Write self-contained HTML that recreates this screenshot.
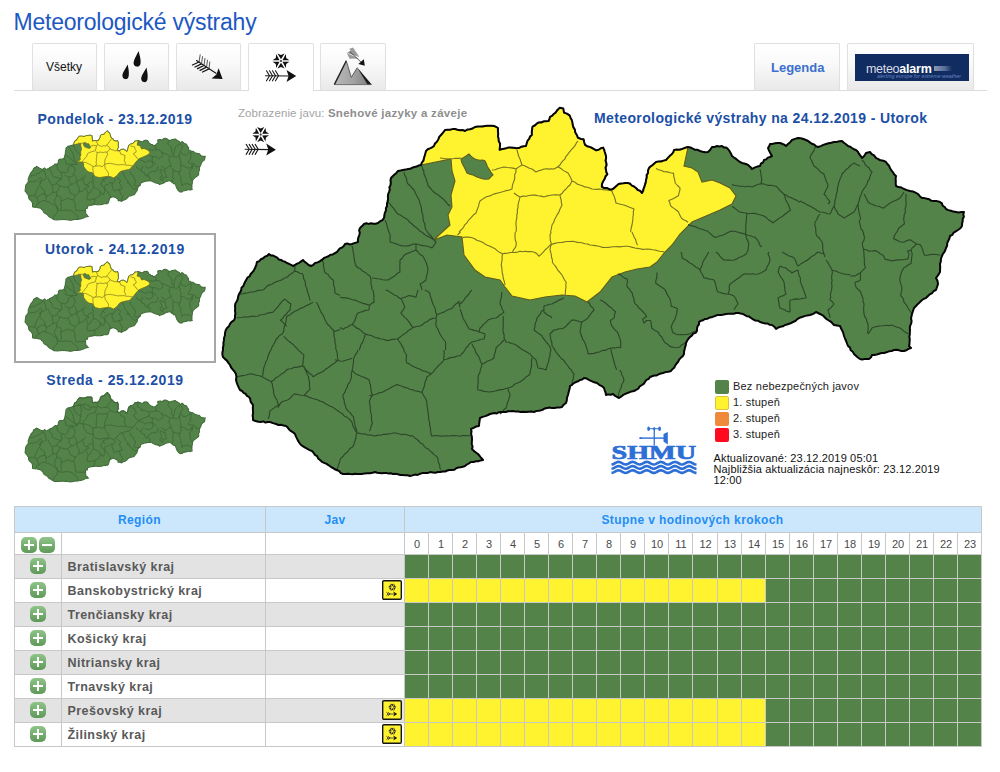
<!DOCTYPE html>
<html><head><meta charset="utf-8">
<style>
*{margin:0;padding:0;box-sizing:border-box}
html,body{width:1000px;height:772px;overflow:hidden;background:#fff;font-family:"Liberation Sans",sans-serif}
.a{position:absolute;white-space:nowrap}
#title{left:13.5px;top:8.5px;font-size:23px;letter-spacing:-0.22px;line-height:26px;color:#1d58c2;}
.tab{position:absolute;top:43px;height:47px;border:1px solid #e0e0e0;border-bottom:none;border-radius:2px 2px 0 0;background:linear-gradient(#fff 0%,#fafafa 40%,#e9e9e9 100%)}
.tab.sel{background:#fff;height:48px}
#tabline{position:absolute;left:14px;top:90px;width:973px;height:1px;background:#dcdcdc}
.dt{font-size:14px;line-height:16px;letter-spacing:0.5px;font-weight:bold;color:#1c4fa6;text-align:center}
svg{position:absolute;left:0;top:0}
.leg{font-size:11px;line-height:13px;letter-spacing:0.2px;color:#222}
.sq{position:absolute;width:14px;height:14px;border-radius:2px}
table{position:absolute;left:14px;top:506px;border-collapse:collapse;}
.rn{font-size:12.5px;line-height:14px;letter-spacing:0.45px;font-weight:bold;color:#595959}
.hr{font-size:11px;line-height:13px;color:#4a4a4a;text-align:center}
.th{font-size:12px;line-height:14px;letter-spacing:0.4px;font-weight:bold;color:#1f8ef5;text-align:center}
.pl{position:absolute;width:16px;height:16px;border-radius:5px;background:linear-gradient(#8fc48a,#5e9a58)}
.pl:before{content:"";position:absolute;left:3px;top:7px;width:10px;height:2px;background:#fff}
.pl:after{content:"";position:absolute;left:7px;top:3px;width:2px;height:10px;background:#fff}
.pl.mi:after{display:none}
.ic{position:absolute;width:20px;height:20px;font-size:0}
</style></head><body>
<div id="title" class="a">Meteorologické výstrahy</div>
<div id="tabline"></div>
<div class="tab" style="left:32px;width:65px"></div>
<div class="tab" style="left:104px;width:65px"></div>
<div class="tab" style="left:176px;width:65px"></div>
<div class="tab sel" style="left:248px;width:66px"></div>
<div class="tab" style="left:320px;width:66px"></div>
<div class="tab" style="left:754px;width:86px"></div>
<div class="tab" style="left:847px;width:127px"></div>
<div class="a" style="left:46px;top:60px;font-size:12px;color:#111">Všetky</div>
<div class="a" style="left:771px;top:60px;font-size:13px;font-weight:bold;color:#3b6fd0">Legenda</div>
<div class="a" style="left:855px;top:54px;width:114px;height:27px;background:#112c60"></div>
<div class="a" style="left:866px;top:62px;font-size:12.5px;letter-spacing:-0.3px;color:#d8dce6;line-height:14px">meteo<b style="color:#fff;letter-spacing:-0.2px">alarm</b></div>
<div class="a" style="left:934px;top:65.5px;width:18px;height:5.5px;background:linear-gradient(90deg,#8a97b4,#5a6d98 60%,#112c60)"></div>
<div class="a" style="left:877px;top:73px;font-size:5.3px;font-style:italic;color:#6684c4;line-height:6px">alerting europe for extreme weather</div>

<div class="a dt" style="left:14px;top:111px;width:202px;letter-spacing:0.45px">Pondelok - 23.12.2019</div>
<div class="a" style="left:14px;top:233px;width:202px;height:130px;border:2px solid #a6a6a6"></div>
<div class="a dt" style="left:14px;top:241px;width:202px;letter-spacing:0.65px">Utorok - 24.12.2019</div>
<div class="a dt" style="left:14px;top:372px;width:202px;letter-spacing:0.6px">Streda - 25.12.2019</div>

<div class="a" style="left:238px;top:107px;font-size:11.5px;line-height:13px;letter-spacing:0.1px;color:#a3a3a3">Zobrazenie javu: <b style="color:#8e8e8e;letter-spacing:0.28px">Snehové jazyky a záveje</b></div>
<div class="a" style="left:594px;top:110px;font-size:14px;line-height:16px;letter-spacing:0.38px;font-weight:bold;color:#1c4fa6">Meteorologické výstrahy na 24.12.2019 - Utorok</div>

<svg width="1000" height="772" viewBox="0 0 1000 772">
<defs><path id="ol" d="M223 350 L222.9 347.6 L223.5 345.2 L223.4 342.8 L223.9 340.4 L224 338 L224.9 335.5 L225 332.9 L225.7 330.3 L227 328 L228.9 326.3 L230 323.8 L231.6 321.8 L233.9 320.4 L235 318 L235 315.6 L235.4 313.2 L235 310.8 L235.2 308.4 L235 306 L235.4 303.5 L236.8 301.3 L237.8 298.9 L238.2 296.4 L239 294 L240.3 292.1 L241.2 290.1 L241.5 287.8 L243.3 286.1 L244.1 284 L245 282 L246.2 279.9 L247.4 277.7 L249.6 276.3 L250.7 274 L252.4 272.2 L253.9 270.3 L255 268 L256.2 265.1 L257 262 L259.3 261.1 L260.9 259.2 L263.2 258.3 L265 256.6 L267.3 255.8 L269 254 L270.8 255.4 L273.2 255.6 L275.2 256.6 L277.2 257.7 L278.8 259.5 L281 259.9 L282.9 261.1 L285.1 261.8 L287 263 L289.1 263.9 L291.1 264.8 L293 266 L295.1 264.9 L297.1 263.7 L299.2 262.8 L301.1 261.4 L303 260 L304.7 261.9 L306.7 263.3 L308.6 265 L311 266 L313.3 264.8 L315.1 263 L317.7 262.4 L320 261.1 L322.1 259.7 L324 258 L326.2 257.1 L328.4 256.2 L330.4 254.7 L332.8 254.4 L334.9 253.1 L337 252 L338.4 250.2 L339.8 248.4 L342.1 247.5 L343.8 246 L345 244 L347.3 243.5 L349.7 244.4 L352 244 L355 242.9 L358 242 L357.9 239.6 L358.4 237.3 L359.3 235 L359.8 232.7 L359.1 230.3 L360 228 L362.1 226.1 L364 224 L366.3 223.3 L368.7 223.9 L371 223.3 L373.4 223.8 L375.7 223.7 L378 223 L380 221.3 L382.4 220.1 L384 218 L384.4 215.5 L384.7 213.1 L385.9 210.8 L385.9 208.3 L387 206 L387 203.6 L387.6 201.3 L388.1 199 L387.9 196.6 L388.1 194.3 L389 192 L389.8 189.7 L389.4 187.3 L390.5 185.1 L390.8 182.7 L390.5 180.3 L391 178 L392.7 176.2 L394.5 174.5 L396.4 172.9 L398 171 L400.5 170.6 L403 170.1 L405.5 169.6 L408 169 L410.3 168.8 L412.3 167.7 L414.5 166.9 L416.7 166.6 L418.7 165.4 L421 165 L421.8 162.6 L423.5 160.6 L424 158 L424.7 155.7 L425.4 153.3 L426 151 L427.7 149.3 L429.9 148.4 L432.1 147.3 L434 146 L434.9 143.5 L436.9 141.7 L438.3 139.5 L439.2 136.9 L441 135 L443.1 132.6 L445 130 L447.5 129.7 L450 129.7 L452.5 129.1 L455 129 L457.5 129.7 L459.9 130.3 L462.6 129.9 L465 131 L467.3 129.5 L470.1 129.2 L472.7 128.5 L475 127 L477.5 126.5 L480 126.4 L482.5 126.4 L485 126 L487.2 125.8 L489.5 125.8 L491.8 125.8 L494 126 L496.1 126.9 L498 128 L497.9 130.8 L498.2 133.6 L498 136.4 L498.6 138.8 L498.7 141.3 L500.1 143.5 L500 146 L499.6 149.7 L502.4 149.1 L505.3 148.6 L508 147.6 L510.8 147.6 L513.6 147.7 L516.4 148.3 L518.9 148.1 L521.1 146.8 L523.5 146.2 L526 146 L526.7 143.3 L527.6 140.6 L529.2 138.9 L530 136.6 L531.8 135 L531.8 132.2 L532.1 129.4 L532.5 126.6 L534.8 125.5 L536.7 123.7 L538.8 122.4 L541.3 122.5 L543.6 121.3 L546.1 121.2 L548.6 121 L549.5 119 L550 116.8 L552.1 115.8 L553.7 114 L555.6 112.6 L557.4 109.9 L559.8 107.7 L563.3 108.4 L564 112.6 L567 113.6 L569.6 115.4 L570.5 117.7 L571.8 119.9 L572.4 122.4 L572.7 125 L573.4 127.4 L574.9 129.6 L575.2 132.2 L576.8 134.9 L578 137.8 L580.7 138.9 L583.6 139.2 L584.1 142 L585 144.8 L587.1 146.2 L589.6 146.9 L591.9 147.8 L594.1 149.1 L596.2 150.4 L598.7 149.8 L600.8 148.3 L603.2 147.6 L604.1 149.6 L604.7 151.8 L605.4 153.9 L606 156 L606.1 158.3 L605.5 160.7 L606.4 163 L606.6 165.3 L605.5 167.7 L606 170 L606.3 172.2 L607.4 174.2 L605.5 176.2 L604.7 178.9 L603.2 181.2 L602 183.9 L601.8 186.8 L604.1 188 L606.8 187.9 L609.1 189.2 L611.6 189.6 L613.6 188.5 L615.2 187 L616.9 185.4 L618.6 184 L620.9 183.5 L623.3 183.3 L625.6 182.9 L628 183 L630.3 183.8 L631.9 185.6 L634.1 186.5 L636 188 L637.8 190 L640.3 190.9 L642 193 L643.1 191 L643.6 188.7 L644.5 186.6 L645.1 184.5 L645.8 182.3 L646 180 L646.7 177.6 L646.6 175.1 L648.1 172.9 L648 170.3 L649 168 L650.6 166.3 L652.6 165.1 L654.3 163.5 L656 162 L658.5 161.4 L661.1 161.5 L663.5 160.6 L666 160 L667.9 157.9 L669.8 155.8 L672 154 L673.4 152.2 L674 150 L676.7 149.6 L679.4 149.7 L682 149 L684.9 147.8 L688 147 L690.5 147.5 L692.8 148.6 L695.1 149.8 L697.7 149.8 L700 151 L702.6 151.7 L705.3 152.2 L708 152 L710.3 149.7 L712 147 L714.5 147.1 L716.9 145.9 L719.5 146.4 L722 146 L723.8 147.4 L726.2 147.5 L728 149 L729.6 151.2 L730.9 153.5 L732 156 L734 157.5 L736.1 158.9 L738 160.5 L740 162 L742.9 163.3 L746 164 L748.4 165.2 L750.3 166.9 L752 169 L754.5 167.6 L757.2 166.6 L760 166 L760.9 163.7 L763.1 162.3 L764 160 L766.2 159.4 L767.8 157.6 L770 157 L772 156 L770.8 154.1 L769.8 152.1 L768.8 150.1 L768 148 L769.2 146.1 L770 144 L772.5 143.9 L775 143.3 L777.5 142.9 L780 143 L782.1 143.8 L784.2 144.6 L786 146 L788 144 L790.2 142.2 L792 140 L795 138.9 L798 138 L800.8 138.2 L803.4 139 L806 140 L808.1 141 L809.9 142.4 L811.8 143.8 L814.1 144.5 L815.8 146.1 L818 147 L820.7 146.1 L823.3 144.9 L826 144 L828.6 143.2 L831.3 142.7 L834 142 L836.7 141.9 L839.3 141.2 L842 141 L843.9 142.8 L846 144.3 L848 146 L850.1 146.7 L852 148 L853.9 149.2 L856 150 L857.9 151.7 L859.1 153.9 L860.6 155.9 L862 158 L864.4 155.8 L866 153 L870 152 L871.7 154.1 L874.1 155.4 L875.7 157.6 L878 159 L880.5 160.3 L883.4 160.7 L886 162 L887.4 164 L889 165.7 L890 168 L891.2 170.2 L892.8 172.1 L894.1 174.3 L896 176 L895.6 178.5 L895.8 181 L895.7 183.5 L896 186 L898.6 187.1 L901.5 187.6 L904 189 L907 190.1 L910 191 L912.9 191.4 L915.5 192.6 L918 194 L919.8 196.2 L922 198 L924.5 198.1 L926.9 198.7 L929.3 199.3 L931.5 200.8 L934 201 L937.1 201.1 L940 202 L941.9 203.4 L942.7 205.8 L944.8 207 L946 209 L948.4 210.1 L950.9 210.7 L953.4 211.6 L956 212 L958.7 212.5 L961.3 212.1 L964 212 L963.3 214.3 L963.9 216.7 L962.7 219 L962.7 221.3 L962.1 223.6 L962 226 L960.3 228.3 L958 230 L955.8 231.3 L953.7 232.6 L952.3 234.9 L950 236 L949.4 238.5 L948.3 240.8 L947.2 243.1 L947.1 245.7 L946 248 L945.3 250.2 L944.3 252.1 L942.9 253.9 L942 256 L941 258.6 L940.8 261.4 L940 264 L940.2 266.7 L940.1 269.3 L940 272 L938.8 274.1 L937.4 276.1 L936 278 L937.5 280.8 L938 284 L937 287 L936 290 L933.7 291 L932.1 293.1 L929.8 294.3 L928 296 L926.2 297.8 L923.9 298.8 L921.8 300.3 L920 302 L917.9 303.9 L916 306 L914 308 L913 311 L912 314 L911.5 316.3 L911 318.5 L911.6 320.9 L911.3 323.2 L910.3 325.4 L909.8 327.7 L910 330 L909.8 332.3 L909.8 334.6 L909.3 336.8 L909.8 339.2 L909.6 341.4 L909.5 343.7 L909 346 L911 348 L908.6 348.9 L906.4 350.2 L904 351 L901.5 351.1 L899 350.3 L896.6 349.7 L894 350 L891.6 351 L888.9 351.3 L886.5 352.3 L884 353 L881.5 353 L879.2 353.7 L876.8 354.5 L874.5 354.9 L872 355 L871 357.3 L869 359 L866.8 359 L864.5 359.1 L862.2 359.4 L860 359 L857.9 357.5 L855.9 355.8 L854 354 L852.8 351.8 L850.7 350.3 L850 347.6 L848 346 L847 343.5 L846.1 341 L845 338.5 L844 336 L843.4 333.4 L842.4 330.9 L841.1 328.5 L840 326 L837 325.5 L834 325 L832.2 323.1 L830.3 321.3 L828 320 L825.9 318.6 L824.2 316.8 L822.3 315.1 L820 314 L818 313 L816 312 L814.1 313.3 L812.1 314.3 L810 315 L807.3 315.4 L804.6 316.1 L802 317 L799.5 317.8 L797.3 319.1 L795.4 321 L793 322 L790.5 323.3 L787.8 324.3 L785 325 L782.9 326.3 L780.4 326.8 L778.1 327.6 L776 329 L774.3 326.7 L772 325 L769.5 324.7 L767.3 323.4 L764.7 323.4 L762.4 322.7 L760 322 L757.9 320.7 L755.3 320.5 L753.1 319.4 L751 318 L749.2 316.6 L746.9 316.2 L744.9 315.2 L743 314 L740.7 313.6 L738.4 313.1 L736 313 L733.6 313.8 L731 313.7 L728.5 313.8 L726 314 L723.8 314.4 L721.7 315.1 L719.4 315.1 L717.1 315.1 L715 316 L712.5 316.9 L710 317.4 L707.6 318.7 L705 319 L703.1 320.2 L700.9 320.8 L699 322 L699 324.4 L697.5 326.4 L697 328.6 L697 331 L695.6 332.9 L693.2 333.6 L691.8 335.6 L690 337 L688.4 338.8 L687.1 340.8 L686 343 L685.8 345.2 L685 347.4 L684.6 349.6 L684 351.7 L684 354 L682.7 356.2 L680.8 357.8 L679.1 359.7 L678 362 L676.4 363.7 L675.2 365.6 L674.2 367.7 L672.4 369.2 L671 371 L668.4 371.8 L665.6 372.1 L663 373 L660.8 373.5 L658.6 374.3 L656.6 375.4 L654.3 375.5 L652.1 376.2 L650 377 L648.7 378.9 L646.5 379.9 L645.1 381.7 L643.9 383.7 L642 385 L639.7 386.3 L638.3 388.7 L636 390 L633.9 391 L631.5 391.4 L629.4 392.3 L627.2 393.1 L625 394 L622.9 395.2 L621 396.7 L619 398 L616.9 396.9 L614.8 395.7 L613 394 L610.7 394.8 L608.3 394.4 L606 395 L605.6 392.6 L604.7 390.3 L604 388 L601.8 386.1 L599.2 384.8 L597 383 L594.2 382.3 L591.6 381.1 L589 380 L586.7 378.6 L584 378 L582.2 379.5 L580 380 L578.1 381.3 L576 382 L573.8 383.1 L572.1 384.8 L570 386 L569.7 388.3 L569.1 390.5 L568.5 392.7 L568 395 L567 397.6 L566.8 400.4 L566 403 L563.7 404.7 L562 407 L559.5 407.6 L557 407.6 L554.5 408 L552 408.1 L549.5 407.5 L547 408 L544.8 408.4 L542.8 409.7 L540.6 410.4 L538.4 410.8 L536.1 411.1 L534 412 L531.3 411.6 L528.7 411.7 L526 412 L523.4 411.7 L520.8 412 L518.2 411.5 L515.6 411.6 L513 411 L510.6 411.2 L508.2 411.3 L505.8 412 L503.4 412.1 L501 412 L498.8 412.2 L496.8 413.5 L494.4 413.1 L492.2 413.5 L490 414 L488 415 L485.4 416.1 L482.6 416.9 L480 418 L479.6 420.7 L479.2 423.3 L479 426 L476.1 426.5 L473.6 427.8 L471 429 L471.5 431.5 L471.1 434 L471.8 436.5 L472 439 L471.9 441.5 L471.7 444 L472.6 446.5 L472 449 L473.8 450.9 L475.9 452.5 L478 454 L479.7 456 L481.3 458 L483 460 L480.6 460.4 L478.3 461.2 L475.8 461.2 L473.5 462.1 L471 462 L469 463.3 L466.9 464.5 L465 466 L462.9 466.7 L460.6 467.3 L458.3 467.5 L456.2 468.2 L454.3 469.8 L452 470 L449.6 470 L447.3 470.5 L445.1 471.5 L442.7 471.5 L440.4 472 L438 472 L435.4 472.7 L432.8 472.4 L430.2 472.1 L427.6 473 L425 473 L422.4 473.1 L420 473.8 L417.6 474.9 L414.9 474.6 L412.5 475.4 L410 476 L407.6 475.2 L405.2 475.2 L402.7 474.9 L400.3 475 L397.9 474.2 L395.5 473.8 L393 474 L390.8 473.3 L388.5 473.6 L386.3 472.9 L384 473 L381.7 473.2 L379.4 473 L377.2 472.8 L375 472 L372.5 472.8 L369.9 473.2 L367.2 473.2 L364.6 473.4 L362 474 L359.6 474 L357.2 474.1 L354.9 473.8 L352.5 474.2 L350.1 474 L347.8 473.7 L345.4 474.1 L343 474 L340.8 473.1 L339.2 471.2 L337.1 470.2 L334.9 469.3 L333 468 L330.8 466.8 L328.7 465.3 L326.6 463.9 L324.2 462.9 L321.9 461.8 L320 460 L318.1 458.4 L317.1 456.2 L314.9 454.9 L313.6 452.8 L312 451 L309.6 450.1 L307.4 448.9 L305.2 447.7 L303.1 446.3 L301 445 L299.5 443 L298.1 440.9 L297 438.6 L295.9 436.4 L295 434 L293.2 432.4 L291 431.2 L289.2 429.6 L287.8 427.6 L286 426 L283.5 425.6 L281 424.8 L278.4 425 L276 424 L273 423.1 L270 422 L267.8 422.1 L265.5 422.6 L263.2 421.4 L261 422 L258.3 421.7 L255.5 421.1 L253 420 L253 417.8 L252.6 415.5 L253.1 413.2 L253 411 L252.8 408 L253 405 L251.6 403.2 L250.5 401.2 L250.2 398.9 L249 397 L247 395.8 L245.6 393.9 L243.6 392.8 L242.1 391 L240 390 L238.8 387.6 L237.7 385.1 L236.7 382.6 L236 380 L236.4 377 L236 374 L234.6 371.7 L232.8 369.6 L231.1 367.5 L230 365 L228.4 362.9 L226.9 360.6 L224.8 358.9 L223 357 L222.4 354.7 L222.4 352.3 Z"/><path id="yl" d="M421 165 L424 158 L426 151 L434 146 L441 135 L445 130 L455 129 L465 131 L475 127 L485 126 L494 126 L498 128 L498 136.4 L500 146 L499.6 149.7 L508 147.6 L516.4 148.3 L526 146 L527.6 140.6 L531.8 135 L532.5 126.6 L538.8 122.4 L548.6 121 L550 116.8 L555.6 112.6 L559.8 107.7 L563.3 108.4 L564 112.6 L569.6 115.4 L572.4 122.4 L575.2 132.2 L578 137.8 L583.6 139.2 L585 144.8 L596.2 150.4 L603.2 147.6 L606 156 L606 170 L607.4 174.2 L603.2 181.2 L601.8 186.8 L611.6 189.6 L618.6 184 L628 183 L636 188 L642 193 L646 180 L649 168 L656 162 L666 160 L672 154 L674 150 L682 149 L688 147 L684 166 L692 168 L698 172 L702 182 L712 180 L720 183 L730 188 L736 196 L732 204 L720 210 L706 216 L692 222 L680 234 L672 245 L665 252 L657 262 L650 267 L637 269 L625 272 L612 277 L600 292 L587 302 L575 296 L562 295 L545 297 L530 300 L512 296 L505 287 L500 280 L485 277 L475 270 L464 255 L462 237 L447 235 L434 240 L439 235 L450 225 L448 215 L452 207 L451 195 L455 181 L452 171 L451 159 Z M461 159 L463.7 157.4 L466.4 155.8 L469 154 L470.8 155.8 L472.8 157.6 L475 159 L477.5 159.7 L479.9 160.3 L482.6 160.1 L485 161 L486.4 163.7 L487.3 166.5 L489 169 L490.9 172.1 L493 175 L490.8 176.8 L489 179 L486 179.3 L483 179 L480 178 L477 177 L473 175 L469.9 174.2 L467 173 L465.7 170.3 L464.4 167.6 L463 165 L461.6 162.1 Z" fill-rule="evenodd"/><path id="dg" d="M240.2 294.4 L242.8 293.7 L245.3 293.1 L248 293 L250.5 292 L253.2 291.9 L255.7 291.2 L258.2 290.4 L260.9 290.3 L263.5 289.8 L266.6 286.6 L269 285.1 L271.7 284.2 L274.1 282.8 L276.6 281.6 L279.3 280.7 L281.9 279.9 L284.2 278.2 L286.9 277.3 L289.3 275 L292.1 273.3 L294.6 271.1 L295 267.7 L294.6 264.3 M294.6 271.1 L297.3 271.7 L299.7 273.2 L302.4 273.6 L303.4 276 L303.6 278.6 L304.9 280.9 L305.5 283.4 L305.5 286 L306.9 288.3 L307.2 290.8 L308.1 293.2 L308.8 295.7 L309.5 298.1 L310.2 300.6 M237.1 317.7 L239.8 317.5 L242.4 317.2 L245.1 316.7 L247.8 317.2 L250.4 316.2 L253.1 316.4 L255.8 316.2 L258.3 316 L260.6 314.7 L263.1 314.5 L265.6 314 L267.9 312.9 L270.4 312.6 L272.9 312.1 L274.7 310.4 L276.2 308.4 L278.1 306.7 L279.4 304.5 L281.2 302.7 L282.8 300.7 L284.7 299.1 L286.8 300.6 L288.6 302.5 L290.9 303.7 L290.4 306.8 L290 310 L287.9 311.9 L286.3 314.2 L284.2 316 L282.7 318.4 L280.6 320.2 L282.8 322.1 L284.7 324.4 L286.9 326.4 M313.3 302.2 L310.7 303.4 L308.1 304.9 L305.5 306 L303 307.6 L300.2 308.4 L297.7 310 L294.9 311.3 L292.2 313 L289.8 314.9 L286.9 316.2 L286.3 318.8 L286 321.4 L285.5 324 L284.4 326.5 L283.8 329 L283.7 331.7 L282.1 333.9 L279.6 335.4 L277.9 337.5 L276 339.5 L274.9 342 L273.7 344.5 L272.1 346.9 L271.1 349.4 L269.8 351.9 L268.7 354.3 L267.8 356.8 L267.3 359.5 L265.8 361.8 L265.1 364.4 L264.1 366.8 L263.5 369.3 L263.1 371.8 L263 374.4 L262 376.8 M237.1 376.8 L239.9 376.1 L242.7 375.6 L245.6 375.3 L248.3 374.3 L251.1 373.7 L253.8 374.5 L256.5 375.3 L259.4 375.8 L262 376.8 L264.3 378 L266.6 379.3 L268.9 380.6 L271.3 381.5 L272.3 384.2 L272.7 387.1 L273.5 389.8 L273.5 392.8 L274.4 395.5 L275.4 397.9 L277.1 400 L277.5 402.7 L279.1 404.8 L276.5 406 L274.4 407.8 L272.1 409.4 L269.8 411 L269.6 413.7 L269.2 416.3 L268.2 418.8 M283.7 336.4 L285.6 338.1 L287.3 339.9 L289.1 341.6 L291.3 342.9 L293.2 344.5 L294.8 346.5 L296.8 348.1 L298.3 350.1 L300.2 351.7 L302.1 353.4 L304 355 L303.5 357.7 L303.1 360.4 L303.1 363.2 L302.4 365.9 L299.6 366.6 L296.9 367.4 L293.9 367.4 L291.3 368.8 L288.4 369 L286.1 370.3 L284.4 372.4 L281.9 373.6 L279.9 375.4 L277.8 376.9 L275.4 378.1 L273.7 380.3 L271.3 381.5 M302.4 365.9 L304.4 367.6 L305.9 369.7 L307.7 371.5 L309.4 373.4 L311.7 374.8 L313.3 376.8 L315.4 375.3 L317.5 374 L319.7 372.9 L322.1 372 L324.2 370.6 L326.2 368.8 L328.5 367.5 L330.5 365.7 L332.7 364.2 L335 362.8 L338.2 359.7 M316.4 302.2 L317.9 304.5 L318.7 307.1 L319.9 309.5 L320.9 312.1 L322.6 314.2 L323.9 316.6 L324.7 319.2 L326 321.6 L327.3 324 L329.5 325.9 L331.3 328.3 L333.5 330.2 L334 333.3 L334 336.4 L335 339.5 L335 342.6 L335.8 345.4 L335.7 348.4 L336.7 351.1 L337.3 354 L337.4 356.9 L338.2 359.7 M322.6 258.7 L322.5 261.2 L323.7 263.6 L323.3 266.2 L324.2 268.6 L324.2 271.1 L325.8 273.3 L328.2 274.5 L329.5 276.9 L331.5 278.7 L333.5 280.4 L333.5 282.9 L333.7 285.5 L334.6 287.9 L334.8 290.4 L335 292.9 L337.4 294.3 L340 295.3 M340 329.4 L338.2 330.2 L333.5 331.7 M403.5 350 L405 352.5 L406.6 355 L406.3 357.6 L406.2 360.2 L406.6 362.8 L409.3 363.9 L411.7 365.6 L414.3 366.9 L416.9 368.1 L419.7 369 L422.1 370.6 L425.3 371.2 L428.3 372.6 L431.4 373.7 L433.4 371.8 L434.8 369.6 L436.8 367.7 L438.4 365.6 L440.6 363.9 L442.4 362 L443.9 359.7 L443.8 356.5 L444.3 353.2 L443.9 350 M358.1 350 L356.9 352.9 L355 355.4 L353.7 358.2 L353.5 361.3 L353.2 364.4 L352.6 367.5 L352.2 370.6 L355.3 373.7 L357.6 374.7 L360 375.8 L362.3 376.8 L364.7 377.6 L367.1 378.7 L369.3 379.9 L369.6 382.5 L370.5 385.1 L370.7 387.7 L371.1 390.4 L371.6 393 L372.4 395.5 L370.5 398.4 L369.3 401.7 L369.9 404.4 L370.3 407.1 L370.3 409.9 L370.8 412.6 L371.5 415.3 L371.5 418.1 L371.7 420.8 L372.4 423.5 L371.1 426 L370.6 428.7 L369.3 431.2 M335 359.7 L337.6 360.4 L340.1 361 L342.8 361.3 L345.9 360.3 L349.1 359.2 L352.2 358.2 M304 365.9 L304.8 368.8 L306.1 371.4 L307.2 374.2 L308.6 376.8 L308.6 379.3 L309.5 381.8 L309.4 384.3 L309.5 386.8 L310.2 389.3 L307.9 391.1 L306 393.4 L304 395.5 L300.8 395.3 L297.7 394.5 L294.6 393.9 L292 395.9 L290 398.6 L287.5 400 L284.9 400.8 L282.2 401.7 L280.3 403.5 L279.1 405.9 L277.5 407.9 M304 395.5 L306.8 396.1 L309.3 397.4 L311.9 398.3 L314.6 399 L317.4 399.7 L319.9 401.1 L322.6 401.7 L324.7 403.3 L327.1 404.4 L329.3 405.7 L331.6 406.8 L334 408 L336 409.6 L338.2 411 L340.2 412.6 L342.6 413.8 L344.2 415.9 L346.6 417 L348.7 418.6 L350.6 420.3 L352.2 422.6 L352.7 425.5 L354.1 427.9 L355.3 430.4 L356.8 432.8 L356.1 435.3 L356 437.9 L355.1 440.3 L354.3 442.7 L353.7 445.2 L352.2 447.2 L349.9 448.5 L348.5 450.6 L346.8 452.6 L344.6 453.9 L343.3 456.2 L341.3 457.7 L340 460 L339.5 462.7 L338.4 465.1 L337.7 467.7 L336.6 470.1 M352.2 370.6 L351.3 373.6 L351.5 376.9 L350.6 379.9 L349.8 382.4 L347.8 384.4 L347.3 387.1 L345.9 389.3 L344.7 392.6 L342.8 395.5 L343.3 398 L344.2 400.4 L344.3 403 L345.5 405.4 L345.9 407.9 L347.5 410.5 L349.9 412.4 L351.7 414.9 L353.7 417.2 L353.8 419.9 L354.6 422.4 L354.9 425.1 L355.6 427.6 L356.7 430.1 L356.8 432.8 M369.3 395.5 L371.9 395.3 L374.4 394.7 L376.8 394 L379.1 392.7 L381.7 392.4 L384.3 391.2 L386.8 389.7 L389.5 388.5 L391.9 386.9 L394.5 385.7 L397.2 384.6 L399.7 385.5 L402.3 386.2 L404.7 387.4 L407.4 388 L409.7 389.3 L412.3 389.6 L414.6 390.7 L417.2 391.1 L419.6 391.8 L422.1 392.4 L423.1 394.8 L424.6 397 L426 399.2 L426.8 401.7 L426.9 404.8 L427.5 407.9 L427.8 411 L428.3 414.1 L428.6 416.8 L428.7 419.6 L429.6 422.3 L429.6 425 L430.4 427.7 L430.6 430.5 L430.9 433.2 L431.4 435.9 L434 435.7 L436.5 435.5 L439.1 435.9 L441.7 436.1 L444.3 436 L446.8 435.9 L449.4 436 L452 435.6 L454.6 435.6 L457.1 435.7 L459.7 436.2 L462.3 435.6 L464.9 435.6 L467.4 435.5 L470 435.9 M356.8 432.8 L359.4 433.4 L362.1 434 L364.9 433.8 L367.4 435 L370.2 434.7 L372.8 435.6 L375.5 435.9 L378.1 435.1 L380.9 435.2 L383.4 434.3 L386.2 434.3 L388.8 433.9 L391.5 433.5 L394.1 432.8 L396.8 433.2 L399.4 434 L402 434.6 L404.8 434.2 L407.5 435 L410.1 435.9 L412.8 435.9 L414.6 437.7 L416.7 439.2 L418.7 440.8 L420.2 442.9 L422.6 444 L424.1 446.1 L426 447.9 L428.3 449.1 L430.1 450.9 L432.1 452.5 L433.8 454.4 L435.9 455.9 L437.7 457.7 L438 460.3 L438.6 462.8 L439.7 465.1 L439.8 467.7 L440.8 470.1 M422.1 392.4 L422.8 389.8 L424 387.3 L424.7 384.7 L425 381.9 L426.3 379.5 L426.8 376.8 L429.2 375.4 L431.4 373.7 M443.9 359.7 L446.6 359.2 L449.2 358.1 L451.9 357.4 L454.7 357.1 L457.2 356 L460 355.7 M782 252 L784.3 253.3 L786.7 254.6 L789 256 L791.7 256.6 L794 258 L795.7 260.5 L796.4 263.5 L798 266 L800.6 264.1 L803.3 262.4 L806 260.7 M747 252 L746 254 L743.8 255.5 L741.3 256.7 L738.8 257.5 L736.5 259.1 L734 260 L731.5 260.3 L729 260 L726.5 260.1 L724 260 L721.8 258.2 L719.9 256.1 L718.2 253.8 L716 252 M708.8 252 L707.2 254.6 L705.7 257.4 L704 260 L702.7 262.4 L702.2 265.1 L701 267.5 L700 270 M700 270 L701.3 272.7 L702.8 275.2 L704 278 L706.6 278.1 L709 279.1 L711.6 279.2 L714 280 L715 282.3 L715.7 284.8 L716.3 287.2 L716.8 289.7 L718 292 L720.5 292.5 L722.9 293.4 L725.4 293.9 L728 294 L731.1 294.8 L734 296 L735.7 298.5 L736.9 301.2 L738 304 L735.7 306.8 L734 310 M768.8 252 L768 254 L769.4 256.9 L770 260 L769.3 262.6 L768.1 265 L766.8 267.4 L766 270 L763.5 271.6 L760.8 273 L758 274 L755.2 274.2 L752.4 273.8 L749.6 274.3 L746.8 273.8 L744 274 L741.6 275.5 L739.5 277.6 L737 279 L734.7 280.7 L732.4 282.4 L730 284 L729.1 286.4 L729.4 289.1 L728.9 291.6 L728 294 M681 252 L681.9 254.9 L682 258 L684.6 259.3 L687.1 260.8 L689.3 262.8 L692 264 L694 265.5 L695.9 267.2 L698.2 268.2 L700 270 M780 266 L778.9 269 L778 272 L779.4 274.6 L780.8 277.1 L782.7 279.4 L784 282 L784.4 285 L784.7 288.1 L785.1 291.1 L786 294 L783.5 295.6 L780.6 296.5 L778 298 L778.4 300.5 L779 303 L779.1 305.6 L780 308 L782.5 309 L785 310 L787.4 311.4 L790 312 L790.1 309 L789.8 306 L789.8 303 L790 300 L792.7 299.7 L795.3 298.9 L798 299.1 L800.7 298.9 L803.3 298.3 L806 298 L805.5 295.5 L804.8 293.1 L803.6 290.8 L803 288.3 L802 286 L801 283.4 L800.3 280.8 L800.4 277.9 L799.1 275.4 L798.4 272.7 L798 270 L794.8 271.2 L792 273 L790.1 271.2 L787.8 269.9 L786 268 L782.9 267.2 L780 266 M800 201 L803 202.5 L806 204 M424.8 290 L427.2 291.2 L429.6 292.4 L430.2 295.7 L431.2 298.8 L432.1 301.5 L433 304.3 L434.4 306.8 L435.4 309.4 L435.6 312.3 L436.8 314.8 L436 318 M373.2 290 L373.6 294 L374 296.7 L373.7 299.4 L374.4 302 L371.8 303.3 L369.6 305.2 L368.8 310 L365.5 310.4 L362.4 311.6 L359.9 312.2 L357.6 313.2 L356.1 316.3 L355.2 319.6 L354 322.2 L352 324.4 L349.7 325.5 L347.7 327 L345.3 327.8 L343.2 329.2 L340 327.6 M340 297.2 L343.2 297.9 L346.5 297.9 L349.6 298.8 L352.8 299.7 L356 300.4 L358.6 301.8 L361.2 302.8 L364 303.6 L366.8 304.4 L369.6 305.2 M385.5 290 L388 290.8 L390.1 292.2 L392.3 293.4 L394.3 295 L396.7 295.8 L398.6 297.6 L400.8 298.8 L403.4 297.6 L406.2 296.8 L408.8 295.6 L412.5 296.1 L416 297.2 L416.6 294.8 L417.3 292.3 L418.2 290 M400.8 298.8 L402.4 301.3 L403.6 304.1 L404.8 306.8 L403.7 309.1 L402.2 311.1 L400.8 313.2 L402.9 315.4 L405 317.6 L407.2 319.6 L409.2 322.1 L411 324.9 L412.8 327.6 L416.3 326.5 L420 326 L422.6 324.6 L424.7 322.6 L427.4 321.5 L429.6 319.6 L432.7 318.4 L436 318 M352 324.4 L354.3 326 L356.3 327.9 L359 328.9 L361.2 330.6 L363.1 332.7 L365.6 334 L368 334.9 L370.5 335.3 L372.8 336.3 L375.1 337.5 L377.6 337.9 L380 338.8 L383.3 339.2 L386.4 340.4 L389.3 340.4 L392 339.3 L394.8 339.3 L397.6 338.8 L399.8 337.3 L401.8 335.6 L404 334 L406.4 332.7 L408.2 330.6 L410.7 329.3 L412.8 327.6 M365.6 334 L364.6 336.7 L363.7 339.4 L362.7 342.1 L361 344.5 L360.2 347.3 L359.2 350 M397.6 338.8 L398.8 341.1 L400.5 343.1 L401.6 345.4 L402.9 347.6 L404 350 M436 318 L436.4 320.7 L435.8 323.3 L436 326 L437.6 328.5 L438.7 331.3 L440 334 L441.7 336.8 L443.5 339.5 L445.6 342 L445.6 344.7 L445.6 347.3 L445.6 350 M436.8 314.8 L439.3 313.7 L441.9 312.7 L444.5 311.9 L446.8 310.3 L449.4 309.2 L452 308.4 L453.8 306 L456 303.9 L458.4 302 L460 301.4 M458.4 302 L459.4 304.7 L460 307.6 M472 290 L470.1 291.8 L468.9 294.1 L467.1 296 L465.3 297.8 L464 300 L462.2 302.2 L460 304 M460 309 L461.1 312 L462.1 315 L463 318 L464.2 320.2 L465.5 322.3 L466.6 324.6 L467.9 326.8 L469 329 L471.6 329.4 L474 330.4 L476.6 330.8 L479 332 L482.1 332.7 L485 334 L484.7 336.5 L484 339 L480.9 339.3 L478 340.5 L475 341.2 L472 342 L469.7 343.7 L468 346 L466.1 347.8 L464.8 350 L463.4 352.2 L461.6 354 L460 356 M502 292 L501.5 295 L501.3 298.1 L500.3 301 L500 304 L501.5 306.6 L502.3 309.5 L504 312 L502.2 313.7 L499.9 314.8 L498.2 316.7 L496 318 L493.2 318.3 L490.6 319 L488 320 L486.2 322.2 L483.9 323.9 L482.2 326.2 L480 328 L479 332 M503 316 L503.4 319 L503.1 322 L503.4 325 L503 328 L503 330.5 L503.5 333 L504.2 335.5 L504 338 L506 342 L508.8 342.3 L511.3 343.5 L514 344 L517.2 345.7 L520 348 L522.4 349.7 L524.9 351.1 L527.5 352.5 L530 354 L531.8 356.2 L533.9 358.1 L536 360 L536.6 362.7 L537.4 365.3 L538 368 L540.7 368.4 L543.4 369 L546 370 L546.7 367.2 L547.5 364.4 L548.6 361.7 L549 358.7 L550 356 M504 340 L502 342 L500.1 344.1 L497.9 345.9 L496 348 L495.7 350.5 L495 353 L494.1 355.4 L494 358 L491.8 359.5 L489.3 360.5 L486.7 361.5 L484.6 363.1 L482 364 L480.5 361.6 L479.8 358.9 L478.6 356.3 L476.9 354.1 L475.5 351.6 L474.9 348.8 L473.1 346.6 L472 344 M482 364 L481.4 366.9 L480.4 369.6 L479.9 372.5 L478.5 375.1 L478 378 L478.2 381 L478 384 L477.6 387 L478 390 L481 390.4 L483.9 391.4 L487 391.7 L490 392 L492.6 391.5 L495.2 391 L497.7 390.4 L500.3 389.6 L503 389.6 L505.4 388.5 L508 388 L510.6 387.2 L512.9 385.9 L515 384 L517.5 383 L520 382 L522 380.4 L524.2 379 L525.8 377 L528.1 375.7 L530 374 L530.2 371.3 L530.9 368.7 L531.4 366 L531.6 363.4 L531.4 360.6 L532 358 M508 388 L508.2 390.8 L509.7 393.2 L510 396 L509 398.3 L508.4 400.8 L507.2 403.1 L506.9 405.6 L506 408 L503.7 409.7 L502.2 412.2 L500 414 M564 298 L561.6 299.1 L559 300.1 L556.8 301.6 L554.3 302.6 L552 304 L549.2 304.3 L546.7 305.3 L544 306 L543.8 309 L544 312 L545.9 313.7 L547.8 315.3 L550.3 316.2 L552 318 M543 310 L541.2 311.8 L540.3 314.2 L538.5 316 L537 318 L536.3 321 L535.1 323.9 L534.9 327 L534 330 L536 331.5 L538 333.1 L540.1 334.4 L542 336 L543.2 338.2 L544.7 340.2 L546.3 342.1 L548 344 L549.9 346.8 L551 350 L550.1 352.9 L550 356 M588 302 L589.8 303.8 L590.7 306.2 L592.8 307.8 L594 310 L592.3 311.9 L590.8 313.8 L589.3 315.9 L588 318 L585.1 320.1 L582 322 L579.5 321.6 L577 320.8 L574.6 320.1 L572 320 L569.9 321.9 L568 324 L566.1 326.1 L564 328 L561.5 328.6 L559 328.8 L556.5 329.6 L554 330 L552 332 L550 334 L550.4 337 L550.9 340 L551.9 342.9 L552 346 L554.2 348.9 L556 352 L557.6 354.1 L559.4 356 L560.9 358.2 L563.2 359.7 L564.8 361.8 L566.3 364 L568 366 L569.3 368.1 L571.2 369.8 L572.3 372.1 L574 374 L573.6 376.5 L573.2 379 L572.2 381.4 L572 384 M582 322 L581.1 324.4 L580.9 327 L580.5 329.5 L580 332 L581 334.3 L581.8 336.8 L582.6 339.2 L584.1 341.3 L585.2 343.6 L586 346 L586.8 348.6 L587.7 351.2 L588 354 L591 353.6 L594.1 353.4 L597 352.2 L600 352 M619.7 370 L621.2 372.3 L621.8 375 L623.3 377.3 L624 380 L623 382.5 L621.6 384.8 L621.2 387.6 L620 390 L618.9 392.6 L618.5 395.3 L618 398 M816 146 L814.7 148.4 L813.8 150.9 L812.3 153.1 L810.8 155.4 L810 158 L811.7 160.5 L812.7 163.3 L814 166 L816.1 167.5 L818.1 169.1 L819.8 171.1 L821.7 172.7 L824 174 L824.5 176.5 L825.7 178.8 L826.1 181.3 L827.5 183.5 L828 186 L826.7 188.7 L825.4 191.3 L824 194 L825.8 195.8 L827 198 L828.6 199.9 L830 202 L828 204 M862 160 L863.9 161.8 L865 164.2 L866.7 166.3 L869 167.7 L870.1 170.2 L872 172 L870.8 174.3 L869.9 176.6 L869.4 179.2 L867.7 181.2 L867.1 183.7 L866 186 L863.8 188.8 L862 192 L861.2 194.4 L860.2 196.7 L859.4 199.1 L858.9 201.6 L858 204 L858.3 207 L858.6 210.1 L859.2 213.1 L860 216 L860.7 220 M860 166 L856.9 164.7 L854 163 L852 164.4 L850 166 L848.1 168.1 L845.8 169.8 L844 172 L842 174 L841.3 176.4 L840.1 178.7 L839.4 181.1 L838.5 183.5 L838 186 L837.4 188.5 L837.3 191.1 L836.6 193.5 L836 196 L835.7 198.5 L834.7 200.9 L834.9 203.6 L834 206 L835.1 208.8 L836.9 211.2 L838 214 L841.1 215.9 L844 218 L846.6 216.6 L849.1 215.1 L851.5 213.5 L854 212 L855.4 209.4 L856.7 206.7 L858 204 M806 204.4 L810 206 L812.5 207.5 L815 209 L817.4 210.7 L820 212 L822.5 212.3 L825 212.8 L827.5 213.7 L830 214 L831.3 211.3 L832.6 208.6 L834 206 M820 214 L818 216.5 L816.9 219.5 L815 222 L814.8 225 L815.7 228 L815.8 231 L816 234 L817.2 236.2 L819.1 237.9 L820.5 240 L822 242 L822.8 244.9 L822.6 248.1 L823.1 251.1 L824 254 L825 257 M864 194 L865.4 196.6 L866.8 199.3 L868 202 L870.5 203.7 L873.3 204.7 L876 206 L878.8 206.3 L881.3 207.6 L884 208 L885.8 206.2 L887.8 204.8 L889.8 203.2 L892 202 L894.7 200.8 L897.5 199.6 L900 198 L902.1 195.1 L904 192 M906 194 L906 197 L905.9 200 L906.1 203 L906 206 L905.1 208.9 L905.4 212.1 L904.1 214.9 L904 218 L903.2 220 M806 261.2 L808 259.5 L810 258 L811.9 256.3 L814.2 255.2 L816 253.5 L818 252 L821 253 L824 254 M826 260 L827.8 262.3 L829.1 265 L830.7 267.4 L832 270 L834.4 270.8 L836.9 271.4 L839.1 272.7 L841.6 273.3 L844 274 L847 274.5 L850 274.6 M832 270 L832.4 272.7 L831.8 275.3 L831.6 278 L832.1 280.7 L831.6 283.3 L832 286 L831.7 288.8 L831.1 291.6 L830.4 294.3 L830.7 297.2 L830 300 L832.3 301.7 L834 304 L832.2 306.2 L830.3 308.3 L828 310 L828.7 312.7 L829.7 315.3 L830 318 M862.7 300 L864 304 L863.8 306.5 L863.6 309 L863.8 311.5 L864 314 L864.7 316.6 L866.3 318.9 L866.9 321.5 L868 324 L868.1 326.5 L868.2 329 L867.7 331.5 L868 334 M868 334 L870.1 331.1 L872 328 L874.6 327 L877.3 326.4 L880 326 L883 325.8 L886 325.3 L889 325.6 L892 325 L894.6 326.2 L897.2 327.3 L900 328 L902 329.4 L903.8 331.2 L906 332.5 L908 334 M903.2 300 L904.5 302.9 L906.6 305.2 L908 308 L910 311 L912 314 M760 169.4 L760.7 172.3 L761 175.3 L761.6 178.2 L761.6 181.1 L760.8 183.8 L757.7 184.5 L754.8 185.7 L752 187 L748.8 186.3 L745.6 186.7 L742.4 186.2 L739.8 186.1 L737.1 185.8 L734.6 185.3 L732 184.6 M760.8 183.8 L763.4 183.8 L765.9 184.7 L768.3 185.4 L771 185.3 L773.5 185.8 L776 186.2 L778.1 188.1 L779.8 190.4 L781.9 192.3 L784 194.2 L785 196.9 L785.7 199.7 L787 202.3 L788.4 204.8 L789.4 207.5 L790.4 210.2 L788.2 211.7 L786 213.3 L784 215 L781.9 216.8 L779.4 218 L777.3 219.8 L774.9 221.2 L772.8 223 M732 206.2 L734.5 207.9 L736.8 209.9 L739.2 211.8 L741.9 212.4 L744.5 212.8 L747.2 213.4 L749.9 213.5 L752.5 213.4 L755.2 213.4 L757.6 214.2 L760.1 214.7 L762.5 215.5 L764.8 216.6 L766.9 218 L768.6 220 L771.1 221.1 L772.8 223 M747.2 213.4 L746.5 216.2 L746.4 219 L746.3 221.8 L745.6 224.6 L745.9 227.8 L745.8 231 L745.6 234.2 L746.1 236.7 L746.8 239.1 L748.1 241.4 L748.8 243.8 L748.5 246.5 L748 249.3 L747.6 252 M688 224.6 L690.4 225.4 L692.8 226.1 L695.3 226.6 L697.6 227.8 L699.9 228.8 L702.4 229.5 L704.8 230.3 L707.2 231 L709.2 232.6 L711.1 234.3 L713 236.1 L715.2 237.4 L717.7 236.8 L720 235.7 L722.5 235.3 L724.8 234.2 L727.9 232.5 L731.2 231 L733.9 231.2 L736.6 231.8 L739.2 232.6 L742.4 233.4 L745.6 234.2 L747.9 235.3 L750.4 235.7 L752.8 236.7 L755.2 237.4 L757 239.7 L758.8 242 L759.6 244.8 L761.6 247 M784 194.2 L786.5 195.3 L788.6 197 L791.3 197.6 L793.6 199 L796.9 200.4 L800 202.2 M404 172 L404.5 174.5 L405.7 176.8 L406.6 179.1 L406.9 181.7 L408 184 L410.2 185.8 L412 188 L414 190 L415.3 192.7 L416.6 195.4 L418 198 L419.3 200.6 L419.9 203.4 L421 206 L421.5 209 L421.7 212.1 L422.9 214.9 L423 218 L423.4 221.1 L424.8 223.9 L425 227.1 L426 230 L427.6 232 L429 234.2 L431 235.8 L432.5 237.9 L434 240 M422 166 L422.5 168.6 L423.8 170.9 L423.9 173.6 L424.8 176.1 L426 178.4 L426.6 181 L427.7 183.4 L428 186 L430.2 187.8 L431.9 190.1 L434 192 L435.9 193.7 L438.2 194.8 L439.9 196.6 L442 198 L444.1 199.9 L446 202 L447.8 204.2 L450 206 M388 202 L389.9 203.8 L391.4 205.9 L393.2 207.8 L394.8 209.9 L396.2 212.1 L398 214 L400.7 215.2 L403.1 216.9 L405.6 218.3 L408 220 L409.7 222.3 L412 224 L414 226 L416.1 227.5 L418.1 229.1 L419.8 231 L422.1 232.3 L424 234 L426.4 235.7 L429.1 236.9 L431.6 238.3 L434 240 M385 220 L386.2 222.7 L387 225.6 L387.8 228.5 L388.6 231.3 L390 234 L390.1 236.7 L390 239.3 L390 242 L392.8 242.7 L395.6 243.6 L398.3 244.7 L401.1 245.6 L404 246 L407.1 245.9 L410.1 245.4 L412.9 244.1 L416 244 L418.5 244.3 L420.9 245.4 L423.5 245.6 L426 246 L429.1 246.7 L432 248 L434.1 245.1 L436 242 L434 240 M416 244 L416 247 L416 250 L413.5 251 L411 252 L408.5 253.1 L406 254 L403.8 255.8 L402.2 258.2 L400 260 L400 263 L399.8 266 L399.9 269 L400 272 L397.4 273.3 L395.3 275.4 L392.9 276.9 L390.5 278.5 L388 280 L385.3 280 L382.6 279.7 L380 279 L377.3 278.8 L374.7 278.3 L372 278 M352 246 L352.8 248.4 L353 251 L353.5 253.5 L354 256 L354.1 258.6 L354.7 261.1 L355.2 263.6 L356 266 L358.2 267.8 L360.8 269.1 L362.8 271.3 L365.4 272.6 L367.6 274.4 L370 276 L370.8 278.7 L371 281.6 L370.9 284.4 L371.9 287.2 L372 290 M416 250 L418 252 L419.8 254.2 L422.3 255.7 L424 258 L425.1 260.5 L426.4 262.8 L426.9 265.6 L428 268 L427.8 271 L427.2 274 L426.2 277 L426 280 L423.2 282.3 L420 284 L421.3 286.9 L422 290 M859.3 220 L859.6 223.1 L860.4 226.2 L861.1 228.8 L862.8 230.9 L863.5 233.5 L864.5 237.6 L863.9 240.4 L862.4 242.8 L862.5 246 L863.5 249 L863.9 252.6 L864 256.3 L864.4 259.1 L864.3 261.8 L864.5 264.6 L865.5 267.7 L862.9 270.2 L860.4 272.8 L857.7 274.2 L855.2 276 L852.6 275.9 L850 276 M863.5 249 L866.2 249.8 L868.7 251.1 L871.8 251 L874.9 250.6 L877.8 251.8 L880.3 254 L883.2 255.2 L885.2 259.4 L888.4 259.9 L891.5 260.9 L894.6 260.4 L897.7 259.9 L900.3 259.9 L902.9 259.8 L905.4 259.2 L908 258.9 L909.1 254.2 L907.5 251.1 L911.1 250.1 L912.2 254.2 L911.7 257.3 L911.4 260.4 L911.1 263.5 L908.5 264.6 L906.4 266.5 L903.9 267.7 L902.2 270.7 L900.8 273.9 L900.2 277 L899.7 280.1 L900.4 282.5 L901.2 284.9 L901.8 287.4 L901.9 290.2 L901.1 292.9 L900.8 295.6 L902.4 297.7 L903.9 299.8 M903.9 220 L904.4 224.1 L901.4 226 L898.7 228.3 L897.5 231.1 L895.6 233.5 L894.3 236 L893.5 238.7 L896.7 240.1 L899.7 241.8 L903.9 242.3 L906.8 240.6 L910.1 239.7 L913.2 241.8 L916.3 243.8 L914.5 246.2 L912.2 248 L911.1 250.1 M916.3 243.8 L920.5 244.9 L921.8 247.6 L922.8 250.3 L923.6 253.2 L924.6 255.2 L927.4 255.2 L930.1 254.6 L932.9 254.2 L936.6 254.5 L940.2 255.2 M860.4 272.8 L860.5 276.5 L860.4 280.1 L857.9 281.4 L855.2 282.2 L855.3 284.9 L856.2 287.4 L858.2 289.5 L860.4 291.5 L861.4 294.3 L862.3 297.1 L863.5 299.8 M618.1 273.9 L620.6 274.9 L622.6 276.6 L624.7 278.2 L627.2 279.1 L627.5 281.7 L626.9 284.2 L627.2 286.8 L629.2 288.8 L630.7 291.1 L632.4 293.3 L632.7 296 L633.9 298.5 L634.2 301.1 L635 303.7 L637.2 305.4 L638.6 307.8 L640.8 309.5 L642.7 311.5 L645 313.8 L646.6 316.6 L642.7 319.2 L644 323.1 L646.6 320.5 L650.5 320.5 L651.2 323 L651.4 325.7 L651.8 328.3 L653.8 329.8 L656.1 330.9 L658.3 332.2 L659.6 335 L661.9 337.2 L663.2 339.9 L664.8 342.5 L667.6 344.2 L669.9 346.4 L672.5 347.1 L675.1 347.5 L677.7 347.7 L680.1 346.8 L681.8 344.7 L684.2 343.8 L685.5 342.5 M657 272.6 L656.9 275.2 L656.7 277.8 L655.9 280.4 L655.7 283 L657.9 284.7 L660.2 286.3 L662.6 287.7 L664.8 289.4 L666.1 291.7 L667 294.1 L668.4 296.4 L669.9 298.5 L670.5 301.1 L671 303.7 L671.2 306.3 L674.6 307.2 L677.7 308.9 L676.8 311.4 L676.8 314.2 L675.6 316.6 L675.1 319.2 L673.4 321.6 L672.2 324.3 L671.2 327 L672 329.6 L672.5 332.2 L675 333.7 L677.7 334.8 L681 334.5 L684.2 334.8 L687.5 334.4 L690.7 333.5 L693.2 331.9 L695.9 330.9 M600 299.8 L602.8 301.2 L605.4 303 L607.8 305 L609.6 306.8 L611.8 308 L613.3 310.2 L615.5 311.5 L614.5 314.6 L614.2 317.9 L610.4 320.5 L610.8 323.2 L611.7 325.7 L613.3 327.6 L614.7 329.8 L616.7 331.4 L618.1 333.5 L618.9 336.1 L619.9 338.6 L620.7 341.2 L620.7 344.4 L620.7 347.7 L618.1 347.3 L615.6 348 L613 347.7 L610.3 348.3 L607.7 349 L605.3 350.4 L602.5 350.4 L600 351.6 M610.4 347.7 L611.1 350.3 L611.6 352.9 L612.3 355.5 L613 358.1 L613.9 361 L614.6 364 L615.5 366.9 L616.8 369.7"/><path id="dy" d="M656 168.6 L658.6 169.7 L661.4 170.6 L664 171.8 L667.3 171.9 L670.4 172.7 L673.6 173.4 L673.8 176.6 L674.7 179.8 L675.2 183 L677.5 185.5 L680 187.8 L679.8 190.5 L679 193.1 L678.4 195.8 L676.1 197.1 L673.7 198.5 L671.3 199.6 L668.8 200.6 L669.9 202.9 L670.4 205.4 L672.2 207.3 L674.4 208.6 L676.4 210.2 L678.4 211.8 L679.8 215.1 L681.6 218.2 L683.6 219.7 L686 220.7 L688 222.2 M440 158 L442.5 158.2 L445 158.8 L447.5 158.7 L450 159 L452.7 158.7 L455.5 158.3 L458.3 158.4 L461 158 M492 170 L495.1 169.7 L498 168.5 L501 167.8 L504 167 L507 167.5 L510 167.7 L513.1 168.1 L516 169 L518.9 166.9 L522 165 L521 162.3 L520.2 159.6 L519 157 L517.9 153.5 L517 150 M516 169 L515.9 172.1 L514.6 174.9 L514.8 178 L514 181 L512.9 183.6 L512.3 186.2 L512 189 L509.3 190 L506.4 190.6 L503.6 191.5 L500.8 192.3 L498 193 L495.5 193.6 L493.1 194.3 L490.9 195.6 L488.4 196.2 L486 197 L482.9 198.9 L480 201 L479.1 203.4 L478.7 205.9 L477.7 208.2 L476.8 210.6 L476 213 L473.7 214.7 L471.8 216.8 L469.9 218.9 L468 221 L466.7 223.1 L464.7 224.8 L463.7 227.1 L462 229 L459 232 M522 165 L524.6 165.7 L527 166.9 L529.4 168.3 L532 169 L534 170.5 L536 172 L538.6 170.8 L541.4 170.1 L544 169 L546.5 168.8 L549 169.1 L551.5 168.8 L554 169 L557.1 167.2 L560 165 L561.2 162.8 L562.8 160.9 L564.8 159.2 L565.7 156.8 L567.4 154.9 L568.8 152.8 L570.4 150.9 L572 149 L573.8 147.2 L575.3 145.2 L576.4 142.9 L578 141 M558 167 L560.6 168.3 L563 170.1 L565.4 171.6 L568 173 L569.5 175.6 L570.9 178.2 L572 181 L570 185 L567.8 186.8 L566 189 L563.9 190.9 L562.2 193.2 L560 195 L557.3 194.9 L554.7 194.8 L552 195 L549.3 195.5 L546.6 196.1 L544 197 L541.1 196.1 L538 195.8 L535.1 195.1 L532 195 L529 195.5 L526 196.2 L522.9 196.1 L520 197 L516.9 195.2 L514 193 M520 197 L519.4 199.7 L518.6 202.3 L518 205 L518 207.5 L517.3 210 L517.5 212.5 L516.8 215 L516.9 217.5 L516.3 220 L516 222.5 L516 225 L516.4 228.5 L516 232 M560 195 L560.4 197.5 L561.2 200 L561.3 202.5 L562 205 L560.8 207.4 L559.7 209.8 L558.8 212.4 L557.3 214.6 L556 217 L554.6 219.6 L553.6 222.5 L552 225 L551.4 228.5 L550.6 232 M572 181 L574.8 182.1 L577.1 184 L580 185 L582.4 185.7 L584.7 186.9 L587.3 187.2 L589.6 188.1 L592 189 L594.7 189.3 L597.3 189.4 L600 189 L602.9 189.8 L606 189.9 L609 190.2 L612 191 L612.7 193.4 L614 195.7 L614.8 198.1 L615.4 200.5 L616 203 L618.6 203.8 L621.3 204.5 L624 205 L626.5 206 L629 207.1 L631.5 207.9 L634 209 L633.3 211.6 L633.4 214.3 L632.9 217 L632.9 219.7 L632.4 222.3 L632 225 L631.1 228.5 L630.6 232 M462.5 237.5 L465.4 237.1 L468.3 237.1 L471.2 237.5 L474.2 238.5 L476.9 240.3 L480 241.2 L482.6 242.2 L484.9 243.9 L487.4 245.2 L490 246.2 L492.5 247.5 L495.2 248.8 L497.4 250.9 L499.8 252.6 L502.5 253.8 L505 253.4 L507.5 253.2 L510 252.5 L512.5 252.5 L515 252.4 L517.5 252.1 L520 251.3 L522.5 251.7 L525 251.2 L527.5 251.6 L530 251.5 L532.6 251.7 L535 252.5 L537.2 254 L538.8 256.2 L541.1 254.4 L543.1 252.3 L545 250 L547.7 247.7 L550 245 M502.5 253.8 L502.1 256.6 L502.1 259.4 L501.7 262.2 L501.2 265 L501.8 267.5 L502 270 L502.2 272.6 L502.9 275 L503.1 277.5 L503.8 280 L504.6 282.5 L505 285 M460.5 232 L457.5 235 M515.3 232 L515 234.7 L515 237.5 L515.3 240 L516.2 242.4 L516.2 245 L515.3 247.6 L513.4 249.8 L512.5 252.5 M551.2 232 L550 235 L550.2 237.5 L550.2 240.1 L551 242.5 L551.2 245 L550.3 247.4 L550 250 L550.8 252.4 L551.3 254.9 L551.6 257.5 L552.4 259.9 L552.5 262.5 L554 264.5 L555.6 266.4 L556.9 268.5 L558.2 270.7 L560 272.5 L561.8 274.8 L563.3 277.4 L564.6 280 L566.2 282.5 L565.8 285 L566 287.5 L565.5 290 L565.5 292.5 L565 295 M550 245 L552.4 244.1 L554.9 243.4 L557.4 242.7 L560 242.5 L562.5 242.4 L565 241.7 L567.5 241.5 L570 241.5 L572.5 241.2 L575 241.7 L577.5 242.4 L580.1 242.5 L582.6 243 L585 243.7 L587.6 244 L590 245 L592.5 245.2 L595 245.6 L597.5 246 L600 246.5 L602.5 247.4 L605 247.5 L607.5 247.4 L610 247.2 L612.5 246.8 L615 246.7 L617.5 246.6 L620 246.9 L622.5 246.5 L625 246.2 L627.6 246.3 L630.1 246.7 L632.5 247.4 L635 248 L637.5 248.4 L640 248.8 L642.5 249.4 L645 249.2 L647.5 249 L650 249.2 L652.5 249.8 L655 250 L657.5 250.8 L660 251.2 L662.6 251.5 L665 252.5 M631.9 232 L633.1 234.6 L634.2 237.2 L635.7 239.6 L636.3 242.4 L637.5 245"/></defs><use href="#ol" fill="#54834a"/><use href="#yl" fill="#fff22f" stroke="#5e5d1c" stroke-width="1.1"/><use href="#dg" fill="none" stroke="#2d4829" stroke-width="1.15" stroke-linejoin="round"/><use href="#dy" fill="none" stroke="#77741f" stroke-width="1.1" stroke-linejoin="round"/><use href="#ol" fill="none" stroke="#050505" stroke-width="2" stroke-linejoin="round"/><g transform="translate(-28.9016 104.778) scale(0.2428)"><use href="#ol" fill="#54834a" stroke="#3d6a35" stroke-width="4.11862"/><use href="#yl" fill="#fff22f" stroke="#6b6a20" stroke-width="3.29489"/><use href="#dg" fill="none" stroke="#3a6333" stroke-width="3.29489"/><use href="#dy" fill="none" stroke="#7d7a22" stroke-width="3.29489"/></g><g transform="translate(-28.9016 235.778) scale(0.2428)"><use href="#ol" fill="#54834a" stroke="#3d6a35" stroke-width="4.11862"/><use href="#yl" fill="#fff22f" stroke="#6b6a20" stroke-width="3.29489"/><use href="#dg" fill="none" stroke="#3a6333" stroke-width="3.29489"/><use href="#dy" fill="none" stroke="#7d7a22" stroke-width="3.29489"/></g><g transform="translate(-28.9016 366.378) scale(0.2428)"><use href="#ol" fill="#54834a" stroke="#3d6a35" stroke-width="4.11862"/><use href="#dg" fill="none" stroke="#3a6333" stroke-width="3.29489"/><use href="#dy" fill="none" stroke="#3a6333" stroke-width="3.29489"/><use href="#yl" fill="none" stroke="#3a6333" stroke-width="3.29489"/></g><g id="shmu" fill="#2e6fd6">
<path d="M611.5 464.50 L612.5 464.37 L613.5 464.02 L614.5 463.50 L615.5 462.93 L616.5 462.41 L617.5 462.04 L618.5 461.90 L619.5 462.01 L620.5 462.36 L621.5 462.87 L622.5 463.44 L623.5 463.97 L624.5 464.35 L625.5 464.50 L626.5 464.40 L627.5 464.06 L628.5 463.56 L629.5 462.98 L630.5 462.45 L631.5 462.07 L632.5 461.90 L633.5 461.99 L634.5 462.32 L635.5 462.81 L636.5 463.39 L637.5 463.92 L638.5 464.32 L639.5 464.49 L640.5 464.42 L641.5 464.10 L642.5 463.61 L643.5 463.04 L644.5 462.50 L645.5 462.10 L646.5 461.91 L647.5 461.97 L648.5 462.28 L649.5 462.76 L650.5 463.33 L651.5 463.87 L652.5 464.29 L653.5 464.49 L654.5 464.44 L655.5 464.14 L656.5 463.67 L657.5 463.10 L658.5 462.55 L659.5 462.13 L660.5 461.92 L661.5 461.95 L662.5 462.24 L663.5 462.71 L664.5 463.27 L665.5 463.82 L666.5 464.26 L667.5 464.48 L668.5 464.45 L669.5 464.18 L670.5 463.72 L671.5 463.16 L672.5 462.60 L673.5 462.16 L674.5 461.93 L675.5 461.94 L676.5 462.20 L677.5 462.65 L678.5 463.21 L679.5 463.77 L680.5 464.22 L681.5 464.47 L682.5 464.47 L683.5 464.22 L684.5 463.77 L685.5 463.21 L686.5 462.65 L687.5 462.20 L688.5 461.94 L689.5 461.93 L690.5 462.16 L691.5 462.60 L692.5 463.16 L693.5 463.72 L694.5 464.18 L695.5 464.45 L696.5 464.48 M611.5 468.70 L612.5 468.57 L613.5 468.22 L614.5 467.70 L615.5 467.13 L616.5 466.61 L617.5 466.24 L618.5 466.10 L619.5 466.21 L620.5 466.56 L621.5 467.07 L622.5 467.64 L623.5 468.17 L624.5 468.55 L625.5 468.70 L626.5 468.60 L627.5 468.26 L628.5 467.76 L629.5 467.18 L630.5 466.65 L631.5 466.27 L632.5 466.10 L633.5 466.19 L634.5 466.52 L635.5 467.01 L636.5 467.59 L637.5 468.12 L638.5 468.52 L639.5 468.69 L640.5 468.62 L641.5 468.30 L642.5 467.81 L643.5 467.24 L644.5 466.70 L645.5 466.30 L646.5 466.11 L647.5 466.17 L648.5 466.48 L649.5 466.96 L650.5 467.53 L651.5 468.07 L652.5 468.49 L653.5 468.69 L654.5 468.64 L655.5 468.34 L656.5 467.87 L657.5 467.30 L658.5 466.75 L659.5 466.33 L660.5 466.12 L661.5 466.15 L662.5 466.44 L663.5 466.91 L664.5 467.47 L665.5 468.02 L666.5 468.46 L667.5 468.68 L668.5 468.65 L669.5 468.38 L670.5 467.92 L671.5 467.36 L672.5 466.80 L673.5 466.36 L674.5 466.13 L675.5 466.14 L676.5 466.40 L677.5 466.85 L678.5 467.41 L679.5 467.97 L680.5 468.42 L681.5 468.67 L682.5 468.67 L683.5 468.42 L684.5 467.97 L685.5 467.41 L686.5 466.85 L687.5 466.40 L688.5 466.14 L689.5 466.13 L690.5 466.36 L691.5 466.80 L692.5 467.36 L693.5 467.92 L694.5 468.38 L695.5 468.65 L696.5 468.68 M611.5 472.90 L612.5 472.77 L613.5 472.42 L614.5 471.90 L615.5 471.33 L616.5 470.81 L617.5 470.44 L618.5 470.30 L619.5 470.41 L620.5 470.76 L621.5 471.27 L622.5 471.84 L623.5 472.37 L624.5 472.75 L625.5 472.90 L626.5 472.80 L627.5 472.46 L628.5 471.96 L629.5 471.38 L630.5 470.85 L631.5 470.47 L632.5 470.30 L633.5 470.39 L634.5 470.72 L635.5 471.21 L636.5 471.79 L637.5 472.32 L638.5 472.72 L639.5 472.89 L640.5 472.82 L641.5 472.50 L642.5 472.01 L643.5 471.44 L644.5 470.90 L645.5 470.50 L646.5 470.31 L647.5 470.37 L648.5 470.68 L649.5 471.16 L650.5 471.73 L651.5 472.27 L652.5 472.69 L653.5 472.89 L654.5 472.84 L655.5 472.54 L656.5 472.07 L657.5 471.50 L658.5 470.95 L659.5 470.53 L660.5 470.32 L661.5 470.35 L662.5 470.64 L663.5 471.11 L664.5 471.67 L665.5 472.22 L666.5 472.66 L667.5 472.88 L668.5 472.85 L669.5 472.58 L670.5 472.12 L671.5 471.56 L672.5 471.00 L673.5 470.56 L674.5 470.33 L675.5 470.34 L676.5 470.60 L677.5 471.05 L678.5 471.61 L679.5 472.17 L680.5 472.62 L681.5 472.87 L682.5 472.87 L683.5 472.62 L684.5 472.17 L685.5 471.61 L686.5 471.05 L687.5 470.60 L688.5 470.34 L689.5 470.33 L690.5 470.56 L691.5 471.00 L692.5 471.56 L693.5 472.12 L694.5 472.58 L695.5 472.85 L696.5 472.88" fill="none" stroke="#2e6fd6" stroke-width="2.6"/>
<text x="611.5" y="459.3" font-family="Liberation Serif" font-weight="bold" font-size="18.5" stroke="#2e6fd6" stroke-width="0.7" textLength="84.5" lengthAdjust="spacingAndGlyphs">SHMU</text>
<rect x="653.6" y="428" width="1.3" height="17.5"/>
<rect x="640" y="437.4" width="26" height="1.4"/>
<ellipse cx="640.6" cy="438.1" rx="1.6" ry="0.9"/>
<path d="M663.5 434 L667.8 432 L667.8 444.5 L663.5 441.5 Z"/>
<ellipse cx="648.6" cy="428.7" rx="1.4" ry="2.2"/><ellipse cx="659.6" cy="428.7" rx="1.4" ry="2.2"/>
<rect x="648.6" y="428.2" width="11" height="1"/>
<ellipse cx="654.2" cy="428.7" rx="1.1" ry="1.6"/>
</g>
<g id="icons">
<!-- raindrops -->
<path d="M138.6 51 C139.5 55 141 59 140.6 63 C140.3 66 138.5 66.8 136.8 66.6 C134.6 66.3 133.4 64.6 133.6 62.4 C133.9 59.5 136.5 55.5 138.6 51 Z" fill="#111"/>
<path d="M127.7 64.5 C128.4 68.5 129.3 72 128.7 76 C128.3 78.4 126.8 79.3 125.3 79.1 C123.3 78.8 122.2 77.2 122.4 75 C122.8 72 125.5 68.5 127.7 64.5 Z" fill="#111"/>
<path d="M146.5 67.4 C147.2 71.4 148.1 75 147.5 79 C147.1 81.4 145.6 82.3 144.1 82.1 C142.1 81.8 141 80.2 141.2 78 C141.6 75 144.3 71.4 146.5 67.4 Z" fill="#111"/>
<!-- wind arrow -->
<g stroke="#151515" stroke-linecap="round">
<line x1="196.5" y1="60.5" x2="216" y2="73.3" stroke-width="1.1"/>
<g stroke-width="1.3">
<line x1="199" y1="62" x2="192.5" y2="65"/><line x1="201.5" y1="63.8" x2="195" y2="67"/><line x1="204" y1="65.5" x2="197.5" y2="68.7"/><line x1="206.5" y1="67.2" x2="200" y2="70.3"/><line x1="209" y1="68.8" x2="202.5" y2="72"/>
</g>
<g stroke-width="0.9" stroke="#444">
<line x1="199" y1="62" x2="200.2" y2="54.8"/><line x1="201.5" y1="63.8" x2="202.5" y2="56.6"/><line x1="204" y1="65.5" x2="205" y2="58.4"/><line x1="206.5" y1="67.2" x2="207.5" y2="60.2"/><line x1="209" y1="68.8" x2="209.8" y2="62"/>
</g>
</g>
<path d="M218.6 68.2 L222.6 79 L211.6 78.6 L216.4 74.6 Z" fill="#111"/>
<!-- snowflake + arrow (selected tab) -->
<g id="snowarrow"><g transform="translate(281 61)"><path d="M0.00 -1.70 L3.55 -7.61 L0.00 -6.00 L-3.55 -7.61Z M-1.47 -0.85 L-4.82 -6.88 L-5.20 -3.00 L-8.37 -0.73Z M-1.47 0.85 L-8.37 0.73 L-5.20 3.00 L-4.82 6.88Z M-0.00 1.70 L-3.55 7.61 L-0.00 6.00 L3.55 7.61Z M1.47 0.85 L4.82 6.88 L5.20 3.00 L8.37 0.73Z M1.47 -0.85 L8.37 -0.73 L5.20 -3.00 L4.82 -6.88Z" fill="#111"/><circle r="1.1" fill="#333"/></g>
<g stroke="#1a1a1a" stroke-width="1.1" stroke-linecap="round">
<line x1="265.5" y1="75.7" x2="290" y2="76"/>
<path d="M266.5 70.8 L269.5 75.7 L266.5 80.8 M269.5 70.8 L272.5 75.7 L269.5 80.8 M272.5 70.8 L275.5 75.7 L272.5 80.8 M275.5 70.8 L278.5 75.7 L275.5 80.8" fill="none"/>
</g>
<path d="M286.5 70 L296.2 76.1 L286.5 82 L288.6 76 Z" fill="#111"/>
</g><use href="#snowarrow" transform="translate(-20.3 73.6)"/>
<!-- mountain -->
<defs><linearGradient id="mg" x1="0" x2="1"><stop offset="0" stop-color="#b9b9b9"/><stop offset="0.5" stop-color="#a3a3a3"/><stop offset="1" stop-color="#7a7a7a"/></linearGradient></defs>
<path d="M334.3 84.6 L346.3 60.8 L351.3 77.4 L357.2 67.6 L371.6 84.6 Z" fill="url(#mg)"/>
<path d="M334.3 84.6 L346.3 60.8" stroke="#222" stroke-width="1.4"/>
<path d="M357.2 67.6 L371.6 84.6 L367.5 84.6 Z" fill="#1b1b1b"/>
<path d="M346.3 60.8 L351.3 77.4 L357.2 67.6" stroke="#333" stroke-width="0.7" fill="none"/>
<path d="M334.3 84.6 L371.6 84.6" stroke="#555" stroke-width="0.8"/>
<path d="M347 53 L351 50 L359 57 Z M349 49 L353 47.4 L359.5 57 Z M347 53.2 L359 58.4 L349.5 58.8 Z" fill="#9a9a9a"/>
<line x1="350" y1="51.8" x2="362" y2="63" stroke="#333" stroke-width="0.8"/>
<path d="M363.8 59.2 L364.8 65.8 L358.4 64 Z" fill="#111"/>
</g>

</svg>

<div class="sq" style="left:715px;top:380px;background:#54834a"></div>
<div class="sq" style="left:715px;top:396px;background:#fff22f;border:1px solid #e0c040"></div>
<div class="sq" style="left:715px;top:412px;background:#ef8a3a"></div>
<div class="sq" style="left:715px;top:428px;background:#ff0a1e"></div>
<div class="a leg" style="left:733px;top:380px">Bez nebezpečných javov</div>
<div class="a leg" style="left:733px;top:396px">1. stupeň</div>
<div class="a leg" style="left:733px;top:412px">2. stupeň</div>
<div class="a leg" style="left:733px;top:428px">3. stupeň</div>
<div class="a leg" style="left:713.5px;top:452.5px;line-height:11.4px;letter-spacing:0.15px;color:#111">Aktualizované: 23.12.2019 05:01<br>Najbližšia aktualizácia najneskôr: 23.12.2019<br>12:00</div>

<div class="a" style="left:14px;top:506px;width:967px;height:26px;background:#cce7fc"></div>
<div class="a" style="left:14px;top:554px;width:391px;height:24px;background:#e3e3e3"></div>
<div class="a" style="left:404px;top:554px;width:24px;height:24px;background:#54834a"></div>
<div class="a" style="left:428px;top:554px;width:24px;height:24px;background:#54834a"></div>
<div class="a" style="left:452px;top:554px;width:24px;height:24px;background:#54834a"></div>
<div class="a" style="left:476px;top:554px;width:24px;height:24px;background:#54834a"></div>
<div class="a" style="left:500px;top:554px;width:24px;height:24px;background:#54834a"></div>
<div class="a" style="left:524px;top:554px;width:24px;height:24px;background:#54834a"></div>
<div class="a" style="left:548px;top:554px;width:24px;height:24px;background:#54834a"></div>
<div class="a" style="left:572px;top:554px;width:24px;height:24px;background:#54834a"></div>
<div class="a" style="left:596px;top:554px;width:24px;height:24px;background:#54834a"></div>
<div class="a" style="left:620px;top:554px;width:24px;height:24px;background:#54834a"></div>
<div class="a" style="left:644px;top:554px;width:24px;height:24px;background:#54834a"></div>
<div class="a" style="left:668px;top:554px;width:24px;height:24px;background:#54834a"></div>
<div class="a" style="left:692px;top:554px;width:25px;height:24px;background:#54834a"></div>
<div class="a" style="left:717px;top:554px;width:24px;height:24px;background:#54834a"></div>
<div class="a" style="left:741px;top:554px;width:24px;height:24px;background:#54834a"></div>
<div class="a" style="left:765px;top:554px;width:24px;height:24px;background:#54834a"></div>
<div class="a" style="left:789px;top:554px;width:24px;height:24px;background:#54834a"></div>
<div class="a" style="left:813px;top:554px;width:24px;height:24px;background:#54834a"></div>
<div class="a" style="left:837px;top:554px;width:24px;height:24px;background:#54834a"></div>
<div class="a" style="left:861px;top:554px;width:24px;height:24px;background:#54834a"></div>
<div class="a" style="left:885px;top:554px;width:24px;height:24px;background:#54834a"></div>
<div class="a" style="left:909px;top:554px;width:24px;height:24px;background:#54834a"></div>
<div class="a" style="left:933px;top:554px;width:24px;height:24px;background:#54834a"></div>
<div class="a" style="left:957px;top:554px;width:24px;height:24px;background:#54834a"></div>
<div class="a rn" style="left:67.5px;top:560px">Bratislavský kraj</div>
<div class="pl" style="left:30px;top:558px"></div>
<div class="a" style="left:14px;top:578px;width:391px;height:24px;background:#fff"></div>
<div class="a" style="left:404px;top:578px;width:24px;height:24px;background:#fff22f"></div>
<div class="a" style="left:428px;top:578px;width:24px;height:24px;background:#fff22f"></div>
<div class="a" style="left:452px;top:578px;width:24px;height:24px;background:#fff22f"></div>
<div class="a" style="left:476px;top:578px;width:24px;height:24px;background:#fff22f"></div>
<div class="a" style="left:500px;top:578px;width:24px;height:24px;background:#fff22f"></div>
<div class="a" style="left:524px;top:578px;width:24px;height:24px;background:#fff22f"></div>
<div class="a" style="left:548px;top:578px;width:24px;height:24px;background:#fff22f"></div>
<div class="a" style="left:572px;top:578px;width:24px;height:24px;background:#fff22f"></div>
<div class="a" style="left:596px;top:578px;width:24px;height:24px;background:#fff22f"></div>
<div class="a" style="left:620px;top:578px;width:24px;height:24px;background:#fff22f"></div>
<div class="a" style="left:644px;top:578px;width:24px;height:24px;background:#fff22f"></div>
<div class="a" style="left:668px;top:578px;width:24px;height:24px;background:#fff22f"></div>
<div class="a" style="left:692px;top:578px;width:25px;height:24px;background:#fff22f"></div>
<div class="a" style="left:717px;top:578px;width:24px;height:24px;background:#fff22f"></div>
<div class="a" style="left:741px;top:578px;width:24px;height:24px;background:#fff22f"></div>
<div class="a" style="left:765px;top:578px;width:24px;height:24px;background:#54834a"></div>
<div class="a" style="left:789px;top:578px;width:24px;height:24px;background:#54834a"></div>
<div class="a" style="left:813px;top:578px;width:24px;height:24px;background:#54834a"></div>
<div class="a" style="left:837px;top:578px;width:24px;height:24px;background:#54834a"></div>
<div class="a" style="left:861px;top:578px;width:24px;height:24px;background:#54834a"></div>
<div class="a" style="left:885px;top:578px;width:24px;height:24px;background:#54834a"></div>
<div class="a" style="left:909px;top:578px;width:24px;height:24px;background:#54834a"></div>
<div class="a" style="left:933px;top:578px;width:24px;height:24px;background:#54834a"></div>
<div class="a" style="left:957px;top:578px;width:24px;height:24px;background:#54834a"></div>
<div class="a rn" style="left:67.5px;top:584px">Banskobystrický kraj</div>
<div class="pl" style="left:30px;top:582px"></div>
<div class="ic" style="left:382px;top:580px"><svg width="20" height="20" viewBox="0 0 20 20" style="position:absolute;left:0;top:0"><rect x="0.7" y="0.7" width="18.6" height="18.6" rx="1.2" fill="#fff22f" stroke="#161616" stroke-width="1.4"/><path transform="translate(10.3 7.2)" d="M0.00 -0.80 L1.75 -3.60 L0.00 -2.90 L-1.75 -3.60Z M-0.69 -0.40 L-2.24 -3.32 L-2.51 -1.45 L-3.99 -0.28Z M-0.69 0.40 L-3.99 0.28 L-2.51 1.45 L-2.24 3.32Z M-0.00 0.80 L-1.75 3.60 L-0.00 2.90 L1.75 3.60Z M0.69 0.40 L2.24 3.32 L2.51 1.45 L3.99 0.28Z M0.69 -0.40 L3.99 -0.28 L2.51 -1.45 L2.24 -3.32Z" fill="#222"/><path d="M4.5 12.3 L6.3 14 L4.5 15.7 M6.3 12.3 L8.1 14 L6.3 15.7" stroke="#333" stroke-width="0.9" fill="none"/><path d="M5 14 h7" stroke="#333" stroke-width="0.8"/><path d="M11.3 11.6 L15.2 14 L11.3 16.4 L12.3 14 Z" fill="#111"/></svg></div>
<div class="a" style="left:14px;top:602px;width:391px;height:24px;background:#e3e3e3"></div>
<div class="a" style="left:404px;top:602px;width:24px;height:24px;background:#54834a"></div>
<div class="a" style="left:428px;top:602px;width:24px;height:24px;background:#54834a"></div>
<div class="a" style="left:452px;top:602px;width:24px;height:24px;background:#54834a"></div>
<div class="a" style="left:476px;top:602px;width:24px;height:24px;background:#54834a"></div>
<div class="a" style="left:500px;top:602px;width:24px;height:24px;background:#54834a"></div>
<div class="a" style="left:524px;top:602px;width:24px;height:24px;background:#54834a"></div>
<div class="a" style="left:548px;top:602px;width:24px;height:24px;background:#54834a"></div>
<div class="a" style="left:572px;top:602px;width:24px;height:24px;background:#54834a"></div>
<div class="a" style="left:596px;top:602px;width:24px;height:24px;background:#54834a"></div>
<div class="a" style="left:620px;top:602px;width:24px;height:24px;background:#54834a"></div>
<div class="a" style="left:644px;top:602px;width:24px;height:24px;background:#54834a"></div>
<div class="a" style="left:668px;top:602px;width:24px;height:24px;background:#54834a"></div>
<div class="a" style="left:692px;top:602px;width:25px;height:24px;background:#54834a"></div>
<div class="a" style="left:717px;top:602px;width:24px;height:24px;background:#54834a"></div>
<div class="a" style="left:741px;top:602px;width:24px;height:24px;background:#54834a"></div>
<div class="a" style="left:765px;top:602px;width:24px;height:24px;background:#54834a"></div>
<div class="a" style="left:789px;top:602px;width:24px;height:24px;background:#54834a"></div>
<div class="a" style="left:813px;top:602px;width:24px;height:24px;background:#54834a"></div>
<div class="a" style="left:837px;top:602px;width:24px;height:24px;background:#54834a"></div>
<div class="a" style="left:861px;top:602px;width:24px;height:24px;background:#54834a"></div>
<div class="a" style="left:885px;top:602px;width:24px;height:24px;background:#54834a"></div>
<div class="a" style="left:909px;top:602px;width:24px;height:24px;background:#54834a"></div>
<div class="a" style="left:933px;top:602px;width:24px;height:24px;background:#54834a"></div>
<div class="a" style="left:957px;top:602px;width:24px;height:24px;background:#54834a"></div>
<div class="a rn" style="left:67.5px;top:608px">Trenčiansky kraj</div>
<div class="pl" style="left:30px;top:606px"></div>
<div class="a" style="left:14px;top:626px;width:391px;height:24px;background:#fff"></div>
<div class="a" style="left:404px;top:626px;width:24px;height:24px;background:#54834a"></div>
<div class="a" style="left:428px;top:626px;width:24px;height:24px;background:#54834a"></div>
<div class="a" style="left:452px;top:626px;width:24px;height:24px;background:#54834a"></div>
<div class="a" style="left:476px;top:626px;width:24px;height:24px;background:#54834a"></div>
<div class="a" style="left:500px;top:626px;width:24px;height:24px;background:#54834a"></div>
<div class="a" style="left:524px;top:626px;width:24px;height:24px;background:#54834a"></div>
<div class="a" style="left:548px;top:626px;width:24px;height:24px;background:#54834a"></div>
<div class="a" style="left:572px;top:626px;width:24px;height:24px;background:#54834a"></div>
<div class="a" style="left:596px;top:626px;width:24px;height:24px;background:#54834a"></div>
<div class="a" style="left:620px;top:626px;width:24px;height:24px;background:#54834a"></div>
<div class="a" style="left:644px;top:626px;width:24px;height:24px;background:#54834a"></div>
<div class="a" style="left:668px;top:626px;width:24px;height:24px;background:#54834a"></div>
<div class="a" style="left:692px;top:626px;width:25px;height:24px;background:#54834a"></div>
<div class="a" style="left:717px;top:626px;width:24px;height:24px;background:#54834a"></div>
<div class="a" style="left:741px;top:626px;width:24px;height:24px;background:#54834a"></div>
<div class="a" style="left:765px;top:626px;width:24px;height:24px;background:#54834a"></div>
<div class="a" style="left:789px;top:626px;width:24px;height:24px;background:#54834a"></div>
<div class="a" style="left:813px;top:626px;width:24px;height:24px;background:#54834a"></div>
<div class="a" style="left:837px;top:626px;width:24px;height:24px;background:#54834a"></div>
<div class="a" style="left:861px;top:626px;width:24px;height:24px;background:#54834a"></div>
<div class="a" style="left:885px;top:626px;width:24px;height:24px;background:#54834a"></div>
<div class="a" style="left:909px;top:626px;width:24px;height:24px;background:#54834a"></div>
<div class="a" style="left:933px;top:626px;width:24px;height:24px;background:#54834a"></div>
<div class="a" style="left:957px;top:626px;width:24px;height:24px;background:#54834a"></div>
<div class="a rn" style="left:67.5px;top:632px">Košický kraj</div>
<div class="pl" style="left:30px;top:630px"></div>
<div class="a" style="left:14px;top:650px;width:391px;height:24px;background:#e3e3e3"></div>
<div class="a" style="left:404px;top:650px;width:24px;height:24px;background:#54834a"></div>
<div class="a" style="left:428px;top:650px;width:24px;height:24px;background:#54834a"></div>
<div class="a" style="left:452px;top:650px;width:24px;height:24px;background:#54834a"></div>
<div class="a" style="left:476px;top:650px;width:24px;height:24px;background:#54834a"></div>
<div class="a" style="left:500px;top:650px;width:24px;height:24px;background:#54834a"></div>
<div class="a" style="left:524px;top:650px;width:24px;height:24px;background:#54834a"></div>
<div class="a" style="left:548px;top:650px;width:24px;height:24px;background:#54834a"></div>
<div class="a" style="left:572px;top:650px;width:24px;height:24px;background:#54834a"></div>
<div class="a" style="left:596px;top:650px;width:24px;height:24px;background:#54834a"></div>
<div class="a" style="left:620px;top:650px;width:24px;height:24px;background:#54834a"></div>
<div class="a" style="left:644px;top:650px;width:24px;height:24px;background:#54834a"></div>
<div class="a" style="left:668px;top:650px;width:24px;height:24px;background:#54834a"></div>
<div class="a" style="left:692px;top:650px;width:25px;height:24px;background:#54834a"></div>
<div class="a" style="left:717px;top:650px;width:24px;height:24px;background:#54834a"></div>
<div class="a" style="left:741px;top:650px;width:24px;height:24px;background:#54834a"></div>
<div class="a" style="left:765px;top:650px;width:24px;height:24px;background:#54834a"></div>
<div class="a" style="left:789px;top:650px;width:24px;height:24px;background:#54834a"></div>
<div class="a" style="left:813px;top:650px;width:24px;height:24px;background:#54834a"></div>
<div class="a" style="left:837px;top:650px;width:24px;height:24px;background:#54834a"></div>
<div class="a" style="left:861px;top:650px;width:24px;height:24px;background:#54834a"></div>
<div class="a" style="left:885px;top:650px;width:24px;height:24px;background:#54834a"></div>
<div class="a" style="left:909px;top:650px;width:24px;height:24px;background:#54834a"></div>
<div class="a" style="left:933px;top:650px;width:24px;height:24px;background:#54834a"></div>
<div class="a" style="left:957px;top:650px;width:24px;height:24px;background:#54834a"></div>
<div class="a rn" style="left:67.5px;top:656px">Nitriansky kraj</div>
<div class="pl" style="left:30px;top:654px"></div>
<div class="a" style="left:14px;top:674px;width:391px;height:24px;background:#fff"></div>
<div class="a" style="left:404px;top:674px;width:24px;height:24px;background:#54834a"></div>
<div class="a" style="left:428px;top:674px;width:24px;height:24px;background:#54834a"></div>
<div class="a" style="left:452px;top:674px;width:24px;height:24px;background:#54834a"></div>
<div class="a" style="left:476px;top:674px;width:24px;height:24px;background:#54834a"></div>
<div class="a" style="left:500px;top:674px;width:24px;height:24px;background:#54834a"></div>
<div class="a" style="left:524px;top:674px;width:24px;height:24px;background:#54834a"></div>
<div class="a" style="left:548px;top:674px;width:24px;height:24px;background:#54834a"></div>
<div class="a" style="left:572px;top:674px;width:24px;height:24px;background:#54834a"></div>
<div class="a" style="left:596px;top:674px;width:24px;height:24px;background:#54834a"></div>
<div class="a" style="left:620px;top:674px;width:24px;height:24px;background:#54834a"></div>
<div class="a" style="left:644px;top:674px;width:24px;height:24px;background:#54834a"></div>
<div class="a" style="left:668px;top:674px;width:24px;height:24px;background:#54834a"></div>
<div class="a" style="left:692px;top:674px;width:25px;height:24px;background:#54834a"></div>
<div class="a" style="left:717px;top:674px;width:24px;height:24px;background:#54834a"></div>
<div class="a" style="left:741px;top:674px;width:24px;height:24px;background:#54834a"></div>
<div class="a" style="left:765px;top:674px;width:24px;height:24px;background:#54834a"></div>
<div class="a" style="left:789px;top:674px;width:24px;height:24px;background:#54834a"></div>
<div class="a" style="left:813px;top:674px;width:24px;height:24px;background:#54834a"></div>
<div class="a" style="left:837px;top:674px;width:24px;height:24px;background:#54834a"></div>
<div class="a" style="left:861px;top:674px;width:24px;height:24px;background:#54834a"></div>
<div class="a" style="left:885px;top:674px;width:24px;height:24px;background:#54834a"></div>
<div class="a" style="left:909px;top:674px;width:24px;height:24px;background:#54834a"></div>
<div class="a" style="left:933px;top:674px;width:24px;height:24px;background:#54834a"></div>
<div class="a" style="left:957px;top:674px;width:24px;height:24px;background:#54834a"></div>
<div class="a rn" style="left:67.5px;top:680px">Trnavský kraj</div>
<div class="pl" style="left:30px;top:678px"></div>
<div class="a" style="left:14px;top:698px;width:391px;height:24px;background:#e3e3e3"></div>
<div class="a" style="left:404px;top:698px;width:24px;height:24px;background:#fff22f"></div>
<div class="a" style="left:428px;top:698px;width:24px;height:24px;background:#fff22f"></div>
<div class="a" style="left:452px;top:698px;width:24px;height:24px;background:#fff22f"></div>
<div class="a" style="left:476px;top:698px;width:24px;height:24px;background:#fff22f"></div>
<div class="a" style="left:500px;top:698px;width:24px;height:24px;background:#fff22f"></div>
<div class="a" style="left:524px;top:698px;width:24px;height:24px;background:#fff22f"></div>
<div class="a" style="left:548px;top:698px;width:24px;height:24px;background:#fff22f"></div>
<div class="a" style="left:572px;top:698px;width:24px;height:24px;background:#fff22f"></div>
<div class="a" style="left:596px;top:698px;width:24px;height:24px;background:#fff22f"></div>
<div class="a" style="left:620px;top:698px;width:24px;height:24px;background:#fff22f"></div>
<div class="a" style="left:644px;top:698px;width:24px;height:24px;background:#fff22f"></div>
<div class="a" style="left:668px;top:698px;width:24px;height:24px;background:#fff22f"></div>
<div class="a" style="left:692px;top:698px;width:25px;height:24px;background:#fff22f"></div>
<div class="a" style="left:717px;top:698px;width:24px;height:24px;background:#fff22f"></div>
<div class="a" style="left:741px;top:698px;width:24px;height:24px;background:#fff22f"></div>
<div class="a" style="left:765px;top:698px;width:24px;height:24px;background:#54834a"></div>
<div class="a" style="left:789px;top:698px;width:24px;height:24px;background:#54834a"></div>
<div class="a" style="left:813px;top:698px;width:24px;height:24px;background:#54834a"></div>
<div class="a" style="left:837px;top:698px;width:24px;height:24px;background:#54834a"></div>
<div class="a" style="left:861px;top:698px;width:24px;height:24px;background:#54834a"></div>
<div class="a" style="left:885px;top:698px;width:24px;height:24px;background:#54834a"></div>
<div class="a" style="left:909px;top:698px;width:24px;height:24px;background:#54834a"></div>
<div class="a" style="left:933px;top:698px;width:24px;height:24px;background:#54834a"></div>
<div class="a" style="left:957px;top:698px;width:24px;height:24px;background:#54834a"></div>
<div class="a rn" style="left:67.5px;top:704px">Prešovský kraj</div>
<div class="pl" style="left:30px;top:702px"></div>
<div class="ic" style="left:382px;top:700px"><svg width="20" height="20" viewBox="0 0 20 20" style="position:absolute;left:0;top:0"><rect x="0.7" y="0.7" width="18.6" height="18.6" rx="1.2" fill="#fff22f" stroke="#161616" stroke-width="1.4"/><path transform="translate(10.3 7.2)" d="M0.00 -0.80 L1.75 -3.60 L0.00 -2.90 L-1.75 -3.60Z M-0.69 -0.40 L-2.24 -3.32 L-2.51 -1.45 L-3.99 -0.28Z M-0.69 0.40 L-3.99 0.28 L-2.51 1.45 L-2.24 3.32Z M-0.00 0.80 L-1.75 3.60 L-0.00 2.90 L1.75 3.60Z M0.69 0.40 L2.24 3.32 L2.51 1.45 L3.99 0.28Z M0.69 -0.40 L3.99 -0.28 L2.51 -1.45 L2.24 -3.32Z" fill="#222"/><path d="M4.5 12.3 L6.3 14 L4.5 15.7 M6.3 12.3 L8.1 14 L6.3 15.7" stroke="#333" stroke-width="0.9" fill="none"/><path d="M5 14 h7" stroke="#333" stroke-width="0.8"/><path d="M11.3 11.6 L15.2 14 L11.3 16.4 L12.3 14 Z" fill="#111"/></svg></div>
<div class="a" style="left:14px;top:722px;width:391px;height:24px;background:#fff"></div>
<div class="a" style="left:404px;top:722px;width:24px;height:24px;background:#fff22f"></div>
<div class="a" style="left:428px;top:722px;width:24px;height:24px;background:#fff22f"></div>
<div class="a" style="left:452px;top:722px;width:24px;height:24px;background:#fff22f"></div>
<div class="a" style="left:476px;top:722px;width:24px;height:24px;background:#fff22f"></div>
<div class="a" style="left:500px;top:722px;width:24px;height:24px;background:#fff22f"></div>
<div class="a" style="left:524px;top:722px;width:24px;height:24px;background:#fff22f"></div>
<div class="a" style="left:548px;top:722px;width:24px;height:24px;background:#fff22f"></div>
<div class="a" style="left:572px;top:722px;width:24px;height:24px;background:#fff22f"></div>
<div class="a" style="left:596px;top:722px;width:24px;height:24px;background:#fff22f"></div>
<div class="a" style="left:620px;top:722px;width:24px;height:24px;background:#fff22f"></div>
<div class="a" style="left:644px;top:722px;width:24px;height:24px;background:#fff22f"></div>
<div class="a" style="left:668px;top:722px;width:24px;height:24px;background:#fff22f"></div>
<div class="a" style="left:692px;top:722px;width:25px;height:24px;background:#fff22f"></div>
<div class="a" style="left:717px;top:722px;width:24px;height:24px;background:#fff22f"></div>
<div class="a" style="left:741px;top:722px;width:24px;height:24px;background:#fff22f"></div>
<div class="a" style="left:765px;top:722px;width:24px;height:24px;background:#54834a"></div>
<div class="a" style="left:789px;top:722px;width:24px;height:24px;background:#54834a"></div>
<div class="a" style="left:813px;top:722px;width:24px;height:24px;background:#54834a"></div>
<div class="a" style="left:837px;top:722px;width:24px;height:24px;background:#54834a"></div>
<div class="a" style="left:861px;top:722px;width:24px;height:24px;background:#54834a"></div>
<div class="a" style="left:885px;top:722px;width:24px;height:24px;background:#54834a"></div>
<div class="a" style="left:909px;top:722px;width:24px;height:24px;background:#54834a"></div>
<div class="a" style="left:933px;top:722px;width:24px;height:24px;background:#54834a"></div>
<div class="a" style="left:957px;top:722px;width:24px;height:24px;background:#54834a"></div>
<div class="a rn" style="left:67.5px;top:728px">Žilinský kraj</div>
<div class="pl" style="left:30px;top:726px"></div>
<div class="ic" style="left:382px;top:724px"><svg width="20" height="20" viewBox="0 0 20 20" style="position:absolute;left:0;top:0"><rect x="0.7" y="0.7" width="18.6" height="18.6" rx="1.2" fill="#fff22f" stroke="#161616" stroke-width="1.4"/><path transform="translate(10.3 7.2)" d="M0.00 -0.80 L1.75 -3.60 L0.00 -2.90 L-1.75 -3.60Z M-0.69 -0.40 L-2.24 -3.32 L-2.51 -1.45 L-3.99 -0.28Z M-0.69 0.40 L-3.99 0.28 L-2.51 1.45 L-2.24 3.32Z M-0.00 0.80 L-1.75 3.60 L-0.00 2.90 L1.75 3.60Z M0.69 0.40 L2.24 3.32 L2.51 1.45 L3.99 0.28Z M0.69 -0.40 L3.99 -0.28 L2.51 -1.45 L2.24 -3.32Z" fill="#222"/><path d="M4.5 12.3 L6.3 14 L4.5 15.7 M6.3 12.3 L8.1 14 L6.3 15.7" stroke="#333" stroke-width="0.9" fill="none"/><path d="M5 14 h7" stroke="#333" stroke-width="0.8"/><path d="M11.3 11.6 L15.2 14 L11.3 16.4 L12.3 14 Z" fill="#111"/></svg></div>
<div class="a" style="left:14px;top:506px;width:1px;height:241px;background:#c8c8c8"></div>
<div class="a" style="left:61px;top:532px;width:1px;height:215px;background:#c8c8c8"></div>
<div class="a" style="left:265px;top:506px;width:1px;height:241px;background:#c8c8c8"></div>
<div class="a" style="left:404px;top:506px;width:1px;height:241px;background:#c8c8c8"></div>
<div class="a" style="left:428px;top:532px;width:1px;height:215px;background:#c8c8c8"></div>
<div class="a" style="left:452px;top:532px;width:1px;height:215px;background:#c8c8c8"></div>
<div class="a" style="left:476px;top:532px;width:1px;height:215px;background:#c8c8c8"></div>
<div class="a" style="left:500px;top:532px;width:1px;height:215px;background:#c8c8c8"></div>
<div class="a" style="left:524px;top:532px;width:1px;height:215px;background:#c8c8c8"></div>
<div class="a" style="left:548px;top:532px;width:1px;height:215px;background:#c8c8c8"></div>
<div class="a" style="left:572px;top:532px;width:1px;height:215px;background:#c8c8c8"></div>
<div class="a" style="left:596px;top:532px;width:1px;height:215px;background:#c8c8c8"></div>
<div class="a" style="left:620px;top:532px;width:1px;height:215px;background:#c8c8c8"></div>
<div class="a" style="left:644px;top:532px;width:1px;height:215px;background:#c8c8c8"></div>
<div class="a" style="left:668px;top:532px;width:1px;height:215px;background:#c8c8c8"></div>
<div class="a" style="left:692px;top:532px;width:1px;height:215px;background:#c8c8c8"></div>
<div class="a" style="left:717px;top:532px;width:1px;height:215px;background:#c8c8c8"></div>
<div class="a" style="left:741px;top:532px;width:1px;height:215px;background:#c8c8c8"></div>
<div class="a" style="left:765px;top:532px;width:1px;height:215px;background:#c8c8c8"></div>
<div class="a" style="left:789px;top:532px;width:1px;height:215px;background:#c8c8c8"></div>
<div class="a" style="left:813px;top:532px;width:1px;height:215px;background:#c8c8c8"></div>
<div class="a" style="left:837px;top:532px;width:1px;height:215px;background:#c8c8c8"></div>
<div class="a" style="left:861px;top:532px;width:1px;height:215px;background:#c8c8c8"></div>
<div class="a" style="left:885px;top:532px;width:1px;height:215px;background:#c8c8c8"></div>
<div class="a" style="left:909px;top:532px;width:1px;height:215px;background:#c8c8c8"></div>
<div class="a" style="left:933px;top:532px;width:1px;height:215px;background:#c8c8c8"></div>
<div class="a" style="left:957px;top:532px;width:1px;height:215px;background:#c8c8c8"></div>
<div class="a" style="left:981px;top:506px;width:1px;height:241px;background:#c8c8c8"></div>
<div class="a" style="left:14px;top:506px;width:968px;height:1px;background:#c8c8c8"></div>
<div class="a" style="left:14px;top:532px;width:968px;height:1px;background:#c8c8c8"></div>
<div class="a" style="left:14px;top:554px;width:968px;height:1px;background:#c8c8c8"></div>
<div class="a" style="left:14px;top:578px;width:968px;height:1px;background:#c8c8c8"></div>
<div class="a" style="left:14px;top:602px;width:968px;height:1px;background:#c8c8c8"></div>
<div class="a" style="left:14px;top:626px;width:968px;height:1px;background:#c8c8c8"></div>
<div class="a" style="left:14px;top:650px;width:968px;height:1px;background:#c8c8c8"></div>
<div class="a" style="left:14px;top:674px;width:968px;height:1px;background:#c8c8c8"></div>
<div class="a" style="left:14px;top:698px;width:968px;height:1px;background:#c8c8c8"></div>
<div class="a" style="left:14px;top:722px;width:968px;height:1px;background:#c8c8c8"></div>
<div class="a" style="left:14px;top:746px;width:968px;height:1px;background:#c8c8c8"></div>
<div class="a hr" style="left:405px;top:537.5px;width:24px">0</div>
<div class="a hr" style="left:429px;top:537.5px;width:24px">1</div>
<div class="a hr" style="left:453px;top:537.5px;width:24px">2</div>
<div class="a hr" style="left:477px;top:537.5px;width:24px">3</div>
<div class="a hr" style="left:501px;top:537.5px;width:24px">4</div>
<div class="a hr" style="left:525px;top:537.5px;width:24px">5</div>
<div class="a hr" style="left:549px;top:537.5px;width:24px">6</div>
<div class="a hr" style="left:573px;top:537.5px;width:24px">7</div>
<div class="a hr" style="left:597px;top:537.5px;width:24px">8</div>
<div class="a hr" style="left:621px;top:537.5px;width:24px">9</div>
<div class="a hr" style="left:645px;top:537.5px;width:24px">10</div>
<div class="a hr" style="left:669px;top:537.5px;width:24px">11</div>
<div class="a hr" style="left:693px;top:537.5px;width:25px">12</div>
<div class="a hr" style="left:718px;top:537.5px;width:24px">13</div>
<div class="a hr" style="left:742px;top:537.5px;width:24px">14</div>
<div class="a hr" style="left:766px;top:537.5px;width:24px">15</div>
<div class="a hr" style="left:790px;top:537.5px;width:24px">16</div>
<div class="a hr" style="left:814px;top:537.5px;width:24px">17</div>
<div class="a hr" style="left:838px;top:537.5px;width:24px">18</div>
<div class="a hr" style="left:862px;top:537.5px;width:24px">19</div>
<div class="a hr" style="left:886px;top:537.5px;width:24px">20</div>
<div class="a hr" style="left:910px;top:537.5px;width:24px">21</div>
<div class="a hr" style="left:934px;top:537.5px;width:24px">22</div>
<div class="a hr" style="left:958px;top:537.5px;width:24px">23</div>
<div class="a th" style="left:14px;top:512.5px;width:251px">Región</div>
<div class="a th" style="left:265px;top:512.5px;width:140px">Jav</div>
<div class="a th" style="left:404px;top:512.5px;width:577px">Stupne v hodinových krokoch</div>
<div class="pl" style="left:21px;top:537px"></div><div class="pl mi" style="left:39px;top:537px"></div>
</body></html>
